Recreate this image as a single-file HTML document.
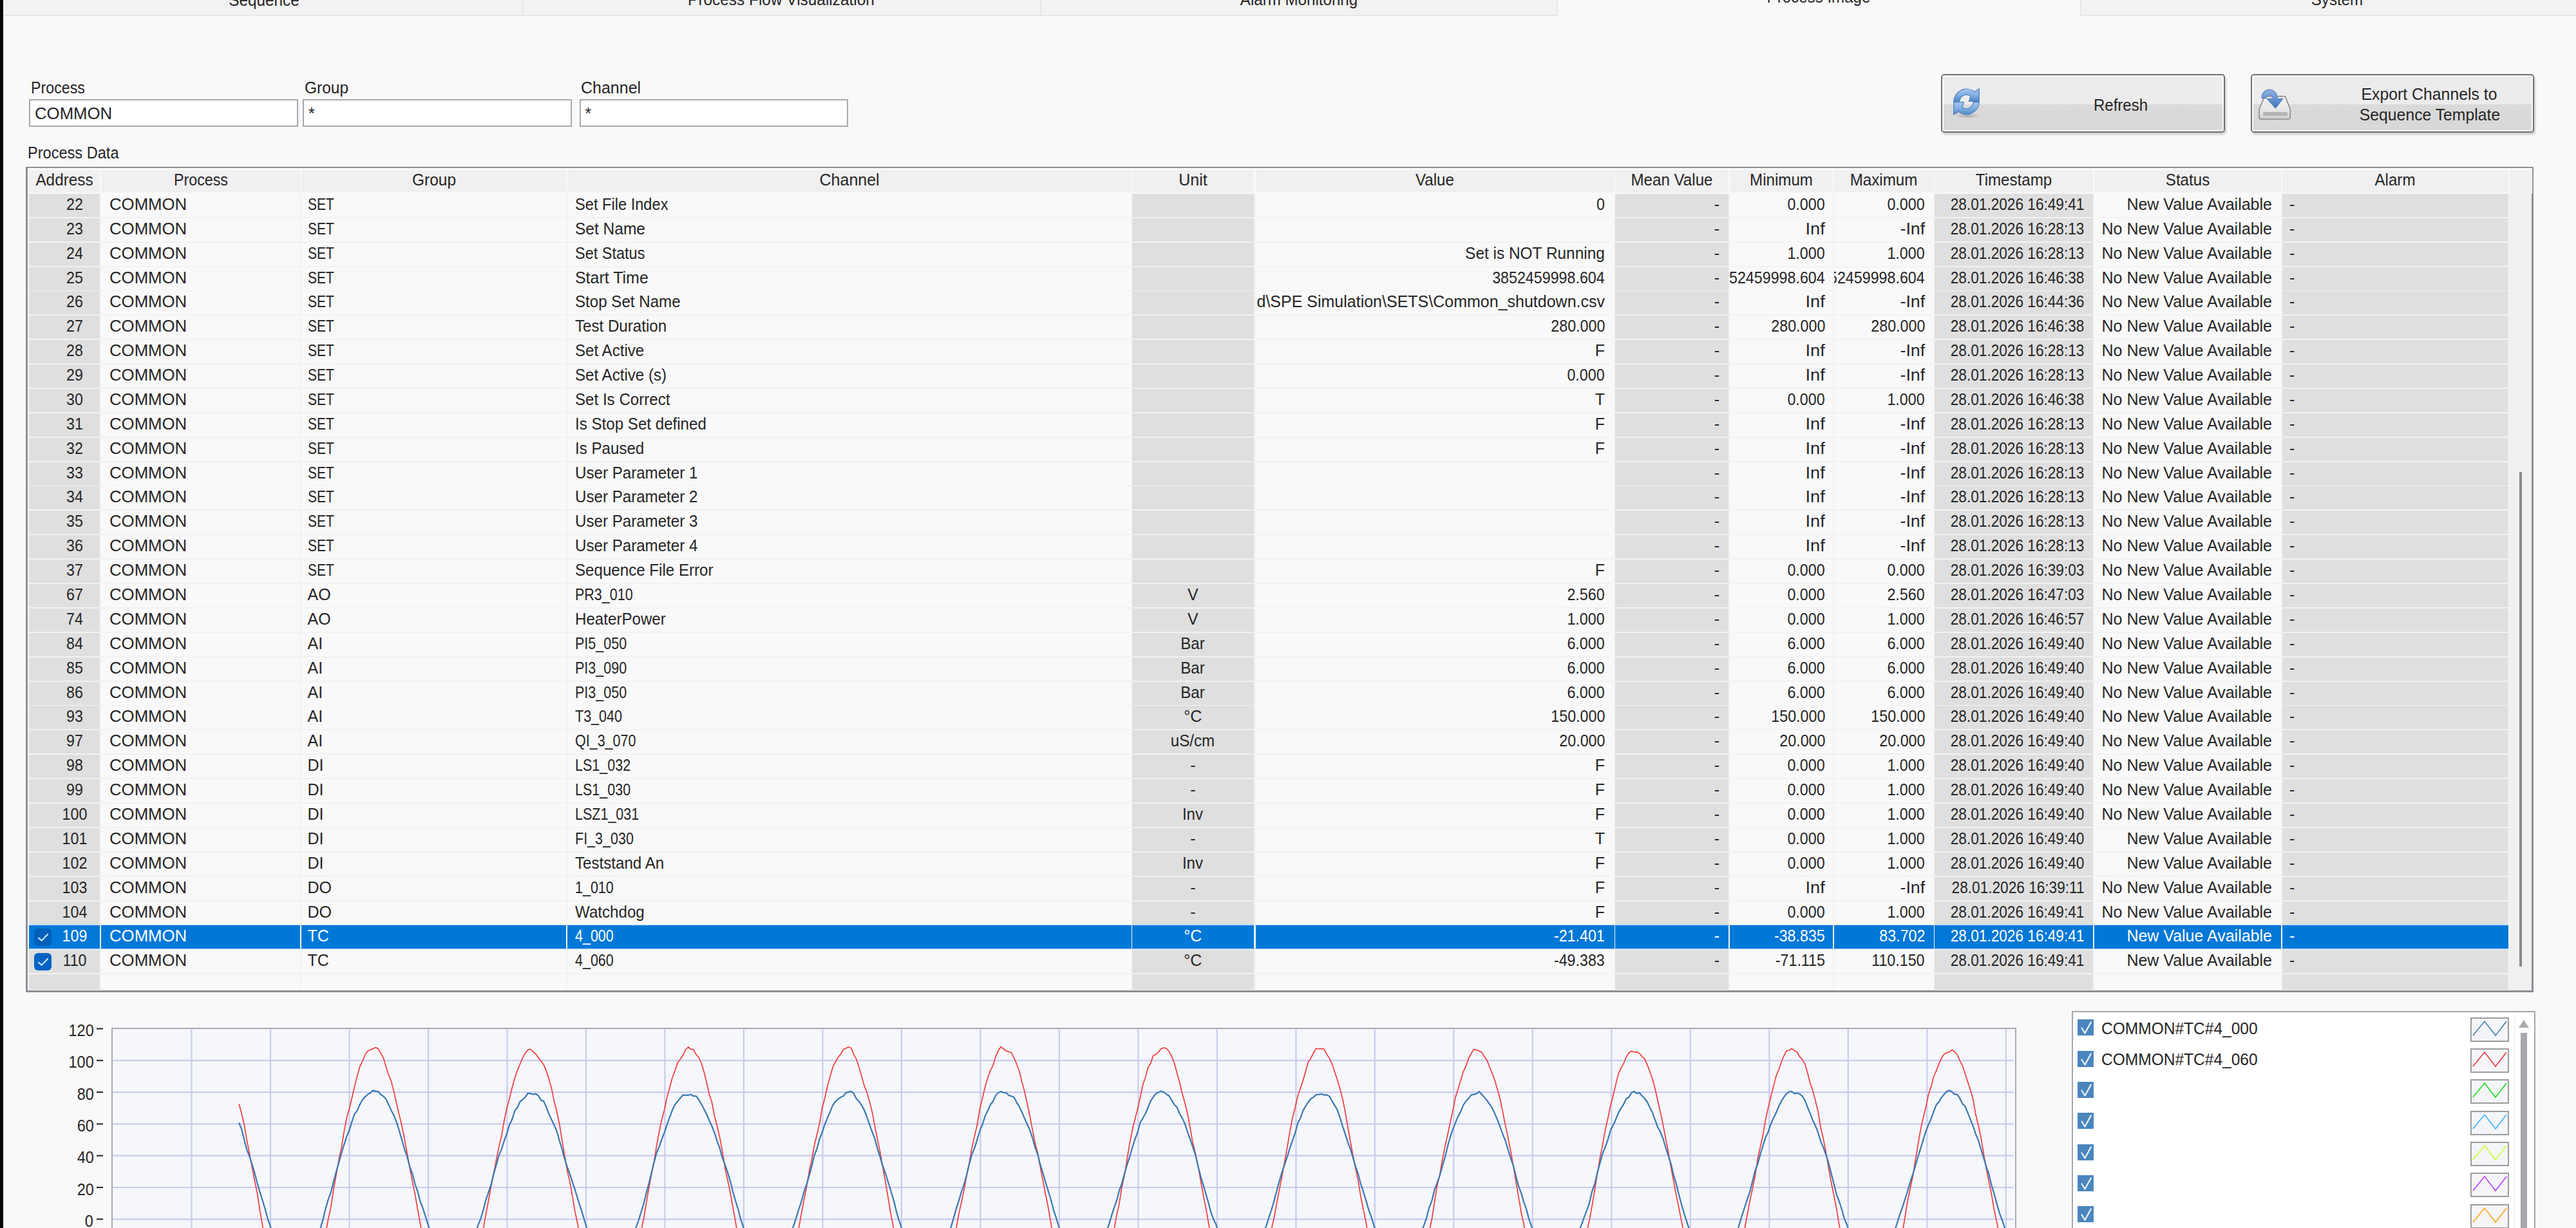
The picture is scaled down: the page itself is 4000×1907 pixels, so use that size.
<!DOCTYPE html><html><head><meta charset="utf-8"><style>
html,body{margin:0;padding:0;}
body{width:4000px;height:1907px;overflow:hidden;position:relative;background:#f9f9f9;font-family:"Liberation Sans",sans-serif;}
.t{position:absolute;white-space:nowrap;line-height:1;}
.r{position:absolute;}
</style></head><body>
<div class="r" style="left:0.0px;top:0.0px;width:4.5px;height:1907.0px;background:#050505;"></div>
<div class="r" style="left:5.0px;top:0.0px;width:2413.0px;height:23.0px;background:#f2f2f2;"></div>
<div class="r" style="left:3231.0px;top:0.0px;width:769.0px;height:23.0px;background:#f2f2f2;"></div>
<div class="r" style="left:5.0px;top:23.0px;width:2413.0px;height:2.0px;background:#e6e6e6;"></div>
<div class="r" style="left:3231.0px;top:23.0px;width:769.0px;height:2.0px;background:#e6e6e6;"></div>
<div class="r" style="left:810.5px;top:0.0px;width:2.0px;height:23.0px;background:#e6e6e6;"></div>
<div class="r" style="left:1615.0px;top:0.0px;width:2.0px;height:23.0px;background:#e6e6e6;"></div>
<div class="r" style="left:2417.0px;top:0.0px;width:2.0px;height:24.0px;background:#e6e6e6;"></div>
<div class="r" style="left:3230.0px;top:0.0px;width:2.0px;height:24.0px;background:#e6e6e6;"></div>
<div class="t" style="top:-12.3px;font-size:25px;color:#262626;transform:scaleX(0.973);transform-origin:center 0;left:-90.2px;width:1000px;text-align:center;">Sequence</div>
<div class="t" style="top:-12.8px;font-size:25px;color:#262626;transform:scaleX(0.976);transform-origin:center 0;left:713.4px;width:1000px;text-align:center;">Process Flow Visualization</div>
<div class="t" style="top:-12.7px;font-size:25px;color:#262626;transform:scaleX(0.965);transform-origin:center 0;left:1517.2px;width:1000px;text-align:center;">Alarm Monitoring</div>
<div class="t" style="top:-17.1px;font-size:25px;color:#262626;transform:scaleX(0.965);transform-origin:center 0;left:2323.5px;width:1000px;text-align:center;">Process Image</div>
<div class="t" style="top:-13.1px;font-size:25px;color:#262626;transform:scaleX(0.965);transform-origin:center 0;left:3129.1px;width:1000px;text-align:center;">System</div>
<div class="t" style="top:124.0px;font-size:25px;color:#262626;transform:scaleX(0.93);transform-origin:left 0;left:47.5px;">Process</div>
<div class="r" style="left:45px;top:154px;width:414px;height:38.5px;border:2px solid #a9a9b1;background:#fff;"></div>
<div class="t" style="top:164.1px;font-size:25px;color:#262626;transform:scaleX(1.03);transform-origin:left 0;left:54.0px;">COMMON</div>
<div class="t" style="top:124.0px;font-size:25px;color:#262626;transform:scaleX(0.98);transform-origin:left 0;left:472.5px;">Group</div>
<div class="r" style="left:470px;top:154px;width:413.5px;height:38.5px;border:2px solid #a9a9b1;background:#fff;"></div>
<div class="t" style="top:164.1px;font-size:25px;color:#262626;left:479.0px;">*</div>
<div class="t" style="top:124.0px;font-size:25px;color:#262626;left:902.0px;">Channel</div>
<div class="r" style="left:899.5px;top:154px;width:413.5px;height:38.5px;border:2px solid #a9a9b1;background:#fff;"></div>
<div class="t" style="top:164.1px;font-size:25px;color:#262626;left:908.5px;">*</div>
<div class="r" style="left:3013.7px;top:114.6px;width:437.3000000000002px;height:87.80000000000001px;border:2px solid #707070;border-radius:5px;box-shadow:2px 3px 3px rgba(0,0,0,0.18);background:linear-gradient(#ececec 0,#ececec 52%,#dadada 52%,#d8d8d8 100%);"><div style="position:absolute;left:0;top:0;right:0;bottom:0;border:2px solid rgba(255,255,255,0.85);border-radius:3px;"></div></div>
<svg class="r" style="left:3030px;top:134px;" width="48" height="52" viewBox="0 0 48 52">
<defs><linearGradient id="rg" x1="0" y1="0" x2="0" y2="1"><stop offset="0" stop-color="#a9c9ee"/><stop offset="0.5" stop-color="#80aee2"/><stop offset="1" stop-color="#4f86c8"/></linearGradient>
<radialGradient id="sh" cx="0.5" cy="0.5" r="0.5"><stop offset="0" stop-color="rgba(0,0,0,0.22)"/><stop offset="1" stop-color="rgba(0,0,0,0)"/></radialGradient></defs>
<ellipse cx="25" cy="46" rx="20" ry="4" fill="url(#sh)"/>
<path d="M3.7 23.4 A20 20 0 0 1 36.1 8.5 L43.3 3.8 L43.3 23.4 L27.5 23.4 L30 15.5 A10.5 10.5 0 0 0 13 23.4 Z" fill="url(#rg)" stroke="#5585c2" stroke-width="1.3" stroke-linejoin="round"/>
<path d="M43.3 24.6 A20 20 0 0 1 10.9 39.5 L3.7 44.2 L3.7 24.6 L19.5 24.6 L17 32.5 A10.5 10.5 0 0 0 34 24.6 Z" fill="url(#rg)" stroke="#5585c2" stroke-width="1.3" stroke-linejoin="round"/>
</svg>
<div class="t" style="top:151.2px;font-size:25px;color:#262626;transform:scaleX(0.96);transform-origin:center 0;left:2793.3px;width:1000px;text-align:center;">Refresh</div>
<div class="r" style="left:3494.5px;top:115.1px;width:436.0999999999999px;height:86.9px;border:2px solid #707070;border-radius:5px;box-shadow:2px 3px 3px rgba(0,0,0,0.18);background:linear-gradient(#ececec 0,#ececec 52%,#dadada 52%,#d8d8d8 100%);"><div style="position:absolute;left:0;top:0;right:0;bottom:0;border:2px solid rgba(255,255,255,0.85);border-radius:3px;"></div></div>
<svg class="r" style="left:3506px;top:134px;" width="54" height="54" viewBox="0 0 54 54">
<defs><linearGradient id="dg" x1="0" y1="0" x2="0" y2="1"><stop offset="0" stop-color="#f4f4f4"/><stop offset="0.6" stop-color="#e6e6e6"/><stop offset="1" stop-color="#cfcfcf"/></linearGradient>
<linearGradient id="ag" x1="0" y1="0" x2="0" y2="1"><stop offset="0" stop-color="#8fb4e2"/><stop offset="1" stop-color="#3d74bd"/></linearGradient></defs>
<path d="M10.5 15.6 L42.4 15.6 L50.2 35.5 L50.2 48 Q50.2 51 47 51 L5 51 Q2 51 2 48 L2 35.5 Z" fill="url(#dg)" stroke="#8a8a8a" stroke-width="1.6" stroke-linejoin="round"/>
<rect x="8.5" y="40" width="37.2" height="6" fill="#b4b4b4"/>
<path d="M6 18.5 A12 12 0 0 1 30 15.6 L30 19.2 L39.2 19.2 L27.4 34.2 L13.8 19.2 L23 19.2 A5 5 0 0 0 13 18.5 Z" fill="url(#ag)" stroke="#4a78b8" stroke-width="1" stroke-linejoin="round"/>
</svg>
<div class="t" style="top:133.9px;font-size:25px;color:#262626;transform:scaleX(0.992);transform-origin:center 0;left:3271.6px;width:1000px;text-align:center;">Export Channels to</div>
<div class="t" style="top:165.8px;font-size:25px;color:#262626;transform:scaleX(0.99);transform-origin:center 0;left:3272.7px;width:1000px;text-align:center;">Sequence Template</div>
<div class="t" style="top:224.9px;font-size:25px;color:#262626;transform:scaleX(0.943);transform-origin:left 0;left:43.0px;">Process Data</div>
<div class="r" style="left:40px;top:258.5px;width:3888px;height:1276.0px;border:3px solid #8e8e96;background:#f2f2f2;"></div>
<div class="r" style="left:43.0px;top:261.0px;width:3889.0px;height:39.8px;background:#fafafa;"></div>
<div class="r" style="left:43.0px;top:261.0px;width:2.0px;height:1276.5px;background:#fafafa;"></div>
<div class="r" style="left:3894.8px;top:299.3px;width:1.7px;height:1238.2px;background:#fafafa;"></div>
<div class="r" style="left:45.0px;top:263.5px;width:110.3px;height:35.8px;background:#f0f0f0;"></div>
<div class="t" style="top:267.1px;font-size:25px;color:#262626;transform:scaleX(0.973);transform-origin:center 0;left:-399.9px;width:1000px;text-align:center;">Address</div>
<div class="r" style="left:157.2px;top:263.5px;width:308.6px;height:35.8px;background:#f0f0f0;"></div>
<div class="t" style="top:267.1px;font-size:25px;color:#262626;transform:scaleX(0.93);transform-origin:center 0;left:-188.5px;width:1000px;text-align:center;">Process</div>
<div class="r" style="left:467.8px;top:263.5px;width:411.5px;height:35.8px;background:#f0f0f0;"></div>
<div class="t" style="top:267.1px;font-size:25px;color:#262626;transform:scaleX(0.98);transform-origin:center 0;left:173.5px;width:1000px;text-align:center;">Group</div>
<div class="r" style="left:881.2px;top:263.5px;width:875.8px;height:35.8px;background:#f0f0f0;"></div>
<div class="t" style="top:267.1px;font-size:25px;color:#262626;left:819.1px;width:1000px;text-align:center;">Channel</div>
<div class="r" style="left:1757.8px;top:263.5px;width:189.4px;height:35.8px;background:#f0f0f0;"></div>
<div class="t" style="top:267.1px;font-size:25px;color:#262626;left:1352.5px;width:1000px;text-align:center;">Unit</div>
<div class="r" style="left:1949.5px;top:263.5px;width:557.1px;height:35.8px;background:#f0f0f0;"></div>
<div class="t" style="top:267.1px;font-size:25px;color:#262626;transform:scaleX(0.965);transform-origin:center 0;left:1728.1px;width:1000px;text-align:center;">Value</div>
<div class="r" style="left:2507.8px;top:263.5px;width:176.2px;height:35.8px;background:#f0f0f0;"></div>
<div class="t" style="top:267.1px;font-size:25px;color:#262626;transform:scaleX(0.965);transform-origin:center 0;left:2095.9px;width:1000px;text-align:center;">Mean Value</div>
<div class="r" style="left:2686.0px;top:263.5px;width:160.3px;height:35.8px;background:#f0f0f0;"></div>
<div class="t" style="top:267.1px;font-size:25px;color:#262626;transform:scaleX(0.965);transform-origin:center 0;left:2266.2px;width:1000px;text-align:center;">Minimum</div>
<div class="r" style="left:2848.0px;top:263.5px;width:154.5px;height:35.8px;background:#f0f0f0;"></div>
<div class="t" style="top:267.1px;font-size:25px;color:#262626;transform:scaleX(0.965);transform-origin:center 0;left:2425.2px;width:1000px;text-align:center;">Maximum</div>
<div class="r" style="left:3003.9px;top:263.5px;width:246.5px;height:35.8px;background:#f0f0f0;"></div>
<div class="t" style="top:267.1px;font-size:25px;color:#262626;transform:scaleX(0.965);transform-origin:center 0;left:2627.2px;width:1000px;text-align:center;">Timestamp</div>
<div class="r" style="left:3252.0px;top:263.5px;width:289.5px;height:35.8px;background:#f0f0f0;"></div>
<div class="t" style="top:267.1px;font-size:25px;color:#262626;transform:scaleX(0.965);transform-origin:center 0;left:2896.8px;width:1000px;text-align:center;">Status</div>
<div class="r" style="left:3543.5px;top:263.5px;width:351.3px;height:35.8px;background:#f0f0f0;"></div>
<div class="t" style="top:267.1px;font-size:25px;color:#262626;transform:scaleX(0.965);transform-origin:center 0;left:3219.2px;width:1000px;text-align:center;">Alarm</div>
<div class="r" style="left:3896.5px;top:263.5px;width:34.5px;height:1274.0px;background:#f0f0f0;"></div>
<div class="r" style="left:45.0px;top:300.8px;width:110.3px;height:36.0px;background:#dfdfdf;"></div>
<div class="t" style="top:304.8px;font-size:25px;color:#262626;transform:scaleX(0.93);transform-origin:center 0;left:-384.0px;width:1000px;text-align:center;">22</div>
<div class="r" style="left:157.2px;top:300.8px;width:308.6px;height:36.0px;background:#f9f9f9;"></div>
<div class="t" style="top:304.8px;font-size:25px;color:#262626;transform:scaleX(1.03);transform-origin:left 0;left:169.8px;">COMMON</div>
<div class="r" style="left:467.8px;top:300.8px;width:411.5px;height:36.0px;background:#f9f9f9;"></div>
<div class="t" style="top:304.8px;font-size:25px;color:#262626;transform:scaleX(0.84);transform-origin:left 0;left:477.5px;">SET</div>
<div class="r" style="left:881.2px;top:300.8px;width:875.8px;height:36.0px;background:#f9f9f9;"></div>
<div class="t" style="top:304.8px;font-size:25px;color:#262626;transform:scaleX(0.945);transform-origin:left 0;left:892.9px;">Set File Index</div>
<div class="r" style="left:1757.8px;top:300.8px;width:189.4px;height:36.0px;background:#dfdfdf;"></div>
<div class="r" style="left:1949.5px;top:300.8px;width:557.1px;height:36.0px;background:#f9f9f9;"></div>
<div class="r" style="left:1949.5px;top:300.8px;width:557.1px;height:36.0px;overflow:hidden;">
<div class="t" style="top:4px;right:14.6px;font-size:25px;color:#262626;transform:scaleX(0.93);transform-origin:right 0;">0</div></div>
<div class="r" style="left:2507.8px;top:300.8px;width:176.2px;height:36.0px;background:#dfdfdf;"></div>
<div class="r" style="left:2507.8px;top:300.8px;width:176.2px;height:36.0px;overflow:hidden;">
<div class="t" style="top:4px;right:14.0px;font-size:25px;color:#262626;">-</div></div>
<div class="r" style="left:2686.0px;top:300.8px;width:160.3px;height:36.0px;background:#f9f9f9;"></div>
<div class="r" style="left:2686.0px;top:300.8px;width:160.3px;height:36.0px;overflow:hidden;">
<div class="t" style="top:4px;right:12.3px;font-size:25px;color:#262626;transform:scaleX(0.93);transform-origin:right 0;">0.000</div></div>
<div class="r" style="left:2848.0px;top:300.8px;width:154.5px;height:36.0px;background:#f9f9f9;"></div>
<div class="r" style="left:2848.0px;top:300.8px;width:154.5px;height:36.0px;overflow:hidden;">
<div class="t" style="top:4px;right:13.5px;font-size:25px;color:#262626;transform:scaleX(0.93);transform-origin:right 0;">0.000</div></div>
<div class="r" style="left:3003.9px;top:300.8px;width:246.5px;height:36.0px;background:#dfdfdf;"></div>
<div class="r" style="left:3003.9px;top:300.8px;width:246.5px;height:36.0px;overflow:hidden;">
<div class="t" style="top:4px;right:13.6px;font-size:25px;color:#262626;transform:scaleX(0.905);transform-origin:right 0;">28.01.2026 16:49:41</div></div>
<div class="r" style="left:3252.0px;top:300.8px;width:289.5px;height:36.0px;background:#f9f9f9;"></div>
<div class="r" style="left:3252.0px;top:300.8px;width:289.5px;height:36.0px;overflow:hidden;">
<div class="t" style="top:4px;right:13.5px;font-size:25px;color:#262626;">New Value Available</div></div>
<div class="r" style="left:3543.5px;top:300.8px;width:351.3px;height:36.0px;background:#dfdfdf;"></div>
<div class="t" style="top:304.8px;font-size:25px;color:#262626;left:3555.0px;">-</div>
<div class="r" style="left:45.0px;top:338.7px;width:110.3px;height:36.0px;background:#dfdfdf;"></div>
<div class="t" style="top:342.7px;font-size:25px;color:#262626;transform:scaleX(0.93);transform-origin:center 0;left:-384.0px;width:1000px;text-align:center;">23</div>
<div class="r" style="left:157.2px;top:338.7px;width:308.6px;height:36.0px;background:#f9f9f9;"></div>
<div class="t" style="top:342.7px;font-size:25px;color:#262626;transform:scaleX(1.03);transform-origin:left 0;left:169.8px;">COMMON</div>
<div class="r" style="left:467.8px;top:338.7px;width:411.5px;height:36.0px;background:#f9f9f9;"></div>
<div class="t" style="top:342.7px;font-size:25px;color:#262626;transform:scaleX(0.84);transform-origin:left 0;left:477.5px;">SET</div>
<div class="r" style="left:881.2px;top:338.7px;width:875.8px;height:36.0px;background:#f9f9f9;"></div>
<div class="t" style="top:342.7px;font-size:25px;color:#262626;transform:scaleX(0.98);transform-origin:left 0;left:892.9px;">Set Name</div>
<div class="r" style="left:1757.8px;top:338.7px;width:189.4px;height:36.0px;background:#dfdfdf;"></div>
<div class="r" style="left:1949.5px;top:338.7px;width:557.1px;height:36.0px;background:#f9f9f9;"></div>
<div class="r" style="left:2507.8px;top:338.7px;width:176.2px;height:36.0px;background:#dfdfdf;"></div>
<div class="r" style="left:2507.8px;top:338.7px;width:176.2px;height:36.0px;overflow:hidden;">
<div class="t" style="top:4px;right:14.0px;font-size:25px;color:#262626;">-</div></div>
<div class="r" style="left:2686.0px;top:338.7px;width:160.3px;height:36.0px;background:#f9f9f9;"></div>
<div class="r" style="left:2686.0px;top:338.7px;width:160.3px;height:36.0px;overflow:hidden;">
<div class="t" style="top:4px;right:12.3px;font-size:25px;color:#262626;transform:scaleX(1.09);transform-origin:right 0;">Inf</div></div>
<div class="r" style="left:2848.0px;top:338.7px;width:154.5px;height:36.0px;background:#f9f9f9;"></div>
<div class="r" style="left:2848.0px;top:338.7px;width:154.5px;height:36.0px;overflow:hidden;">
<div class="t" style="top:4px;right:13.5px;font-size:25px;color:#262626;transform:scaleX(1.07);transform-origin:right 0;">-Inf</div></div>
<div class="r" style="left:3003.9px;top:338.7px;width:246.5px;height:36.0px;background:#dfdfdf;"></div>
<div class="r" style="left:3003.9px;top:338.7px;width:246.5px;height:36.0px;overflow:hidden;">
<div class="t" style="top:4px;right:13.6px;font-size:25px;color:#262626;transform:scaleX(0.905);transform-origin:right 0;">28.01.2026 16:28:13</div></div>
<div class="r" style="left:3252.0px;top:338.7px;width:289.5px;height:36.0px;background:#f9f9f9;"></div>
<div class="r" style="left:3252.0px;top:338.7px;width:289.5px;height:36.0px;overflow:hidden;">
<div class="t" style="top:4px;right:13.5px;font-size:25px;color:#262626;">No New Value Available</div></div>
<div class="r" style="left:3543.5px;top:338.7px;width:351.3px;height:36.0px;background:#dfdfdf;"></div>
<div class="t" style="top:342.7px;font-size:25px;color:#262626;left:3555.0px;">-</div>
<div class="r" style="left:45.0px;top:376.6px;width:110.3px;height:36.0px;background:#dfdfdf;"></div>
<div class="t" style="top:380.6px;font-size:25px;color:#262626;transform:scaleX(0.93);transform-origin:center 0;left:-384.0px;width:1000px;text-align:center;">24</div>
<div class="r" style="left:157.2px;top:376.6px;width:308.6px;height:36.0px;background:#f9f9f9;"></div>
<div class="t" style="top:380.6px;font-size:25px;color:#262626;transform:scaleX(1.03);transform-origin:left 0;left:169.8px;">COMMON</div>
<div class="r" style="left:467.8px;top:376.6px;width:411.5px;height:36.0px;background:#f9f9f9;"></div>
<div class="t" style="top:380.6px;font-size:25px;color:#262626;transform:scaleX(0.84);transform-origin:left 0;left:477.5px;">SET</div>
<div class="r" style="left:881.2px;top:376.6px;width:875.8px;height:36.0px;background:#f9f9f9;"></div>
<div class="t" style="top:380.6px;font-size:25px;color:#262626;transform:scaleX(0.94);transform-origin:left 0;left:892.9px;">Set Status</div>
<div class="r" style="left:1757.8px;top:376.6px;width:189.4px;height:36.0px;background:#dfdfdf;"></div>
<div class="r" style="left:1949.5px;top:376.6px;width:557.1px;height:36.0px;background:#f9f9f9;"></div>
<div class="r" style="left:1949.5px;top:376.6px;width:557.1px;height:36.0px;overflow:hidden;">
<div class="t" style="top:4px;right:14.6px;font-size:25px;color:#262626;transform:scaleX(0.977);transform-origin:right 0;">Set is NOT Running</div></div>
<div class="r" style="left:2507.8px;top:376.6px;width:176.2px;height:36.0px;background:#dfdfdf;"></div>
<div class="r" style="left:2507.8px;top:376.6px;width:176.2px;height:36.0px;overflow:hidden;">
<div class="t" style="top:4px;right:14.0px;font-size:25px;color:#262626;">-</div></div>
<div class="r" style="left:2686.0px;top:376.6px;width:160.3px;height:36.0px;background:#f9f9f9;"></div>
<div class="r" style="left:2686.0px;top:376.6px;width:160.3px;height:36.0px;overflow:hidden;">
<div class="t" style="top:4px;right:12.3px;font-size:25px;color:#262626;transform:scaleX(0.93);transform-origin:right 0;">1.000</div></div>
<div class="r" style="left:2848.0px;top:376.6px;width:154.5px;height:36.0px;background:#f9f9f9;"></div>
<div class="r" style="left:2848.0px;top:376.6px;width:154.5px;height:36.0px;overflow:hidden;">
<div class="t" style="top:4px;right:13.5px;font-size:25px;color:#262626;transform:scaleX(0.93);transform-origin:right 0;">1.000</div></div>
<div class="r" style="left:3003.9px;top:376.6px;width:246.5px;height:36.0px;background:#dfdfdf;"></div>
<div class="r" style="left:3003.9px;top:376.6px;width:246.5px;height:36.0px;overflow:hidden;">
<div class="t" style="top:4px;right:13.6px;font-size:25px;color:#262626;transform:scaleX(0.905);transform-origin:right 0;">28.01.2026 16:28:13</div></div>
<div class="r" style="left:3252.0px;top:376.6px;width:289.5px;height:36.0px;background:#f9f9f9;"></div>
<div class="r" style="left:3252.0px;top:376.6px;width:289.5px;height:36.0px;overflow:hidden;">
<div class="t" style="top:4px;right:13.5px;font-size:25px;color:#262626;">No New Value Available</div></div>
<div class="r" style="left:3543.5px;top:376.6px;width:351.3px;height:36.0px;background:#dfdfdf;"></div>
<div class="t" style="top:380.6px;font-size:25px;color:#262626;left:3555.0px;">-</div>
<div class="r" style="left:45.0px;top:414.5px;width:110.3px;height:36.0px;background:#dfdfdf;"></div>
<div class="t" style="top:418.5px;font-size:25px;color:#262626;transform:scaleX(0.93);transform-origin:center 0;left:-384.0px;width:1000px;text-align:center;">25</div>
<div class="r" style="left:157.2px;top:414.5px;width:308.6px;height:36.0px;background:#f9f9f9;"></div>
<div class="t" style="top:418.5px;font-size:25px;color:#262626;transform:scaleX(1.03);transform-origin:left 0;left:169.8px;">COMMON</div>
<div class="r" style="left:467.8px;top:414.5px;width:411.5px;height:36.0px;background:#f9f9f9;"></div>
<div class="t" style="top:418.5px;font-size:25px;color:#262626;transform:scaleX(0.84);transform-origin:left 0;left:477.5px;">SET</div>
<div class="r" style="left:881.2px;top:414.5px;width:875.8px;height:36.0px;background:#f9f9f9;"></div>
<div class="t" style="top:418.5px;font-size:25px;color:#262626;left:892.9px;">Start Time</div>
<div class="r" style="left:1757.8px;top:414.5px;width:189.4px;height:36.0px;background:#dfdfdf;"></div>
<div class="r" style="left:1949.5px;top:414.5px;width:557.1px;height:36.0px;background:#f9f9f9;"></div>
<div class="r" style="left:1949.5px;top:414.5px;width:557.1px;height:36.0px;overflow:hidden;">
<div class="t" style="top:4px;right:14.6px;font-size:25px;color:#262626;transform:scaleX(0.93);transform-origin:right 0;">3852459998.604</div></div>
<div class="r" style="left:2507.8px;top:414.5px;width:176.2px;height:36.0px;background:#dfdfdf;"></div>
<div class="r" style="left:2507.8px;top:414.5px;width:176.2px;height:36.0px;overflow:hidden;">
<div class="t" style="top:4px;right:14.0px;font-size:25px;color:#262626;">-</div></div>
<div class="r" style="left:2686.0px;top:414.5px;width:160.3px;height:36.0px;background:#f9f9f9;"></div>
<div class="r" style="left:2686.0px;top:414.5px;width:160.3px;height:36.0px;overflow:hidden;">
<div class="t" style="top:4px;right:12.3px;font-size:25px;color:#262626;transform:scaleX(0.93);transform-origin:right 0;">3852459998.604</div></div>
<div class="r" style="left:2848.0px;top:414.5px;width:154.5px;height:36.0px;background:#f9f9f9;"></div>
<div class="r" style="left:2848.0px;top:414.5px;width:154.5px;height:36.0px;overflow:hidden;">
<div class="t" style="top:4px;right:13.5px;font-size:25px;color:#262626;transform:scaleX(0.93);transform-origin:right 0;">3852459998.604</div></div>
<div class="r" style="left:3003.9px;top:414.5px;width:246.5px;height:36.0px;background:#dfdfdf;"></div>
<div class="r" style="left:3003.9px;top:414.5px;width:246.5px;height:36.0px;overflow:hidden;">
<div class="t" style="top:4px;right:13.6px;font-size:25px;color:#262626;transform:scaleX(0.905);transform-origin:right 0;">28.01.2026 16:46:38</div></div>
<div class="r" style="left:3252.0px;top:414.5px;width:289.5px;height:36.0px;background:#f9f9f9;"></div>
<div class="r" style="left:3252.0px;top:414.5px;width:289.5px;height:36.0px;overflow:hidden;">
<div class="t" style="top:4px;right:13.5px;font-size:25px;color:#262626;">No New Value Available</div></div>
<div class="r" style="left:3543.5px;top:414.5px;width:351.3px;height:36.0px;background:#dfdfdf;"></div>
<div class="t" style="top:418.5px;font-size:25px;color:#262626;left:3555.0px;">-</div>
<div class="r" style="left:45.0px;top:452.3px;width:110.3px;height:36.0px;background:#dfdfdf;"></div>
<div class="t" style="top:456.3px;font-size:25px;color:#262626;transform:scaleX(0.93);transform-origin:center 0;left:-384.0px;width:1000px;text-align:center;">26</div>
<div class="r" style="left:157.2px;top:452.3px;width:308.6px;height:36.0px;background:#f9f9f9;"></div>
<div class="t" style="top:456.3px;font-size:25px;color:#262626;transform:scaleX(1.03);transform-origin:left 0;left:169.8px;">COMMON</div>
<div class="r" style="left:467.8px;top:452.3px;width:411.5px;height:36.0px;background:#f9f9f9;"></div>
<div class="t" style="top:456.3px;font-size:25px;color:#262626;transform:scaleX(0.84);transform-origin:left 0;left:477.5px;">SET</div>
<div class="r" style="left:881.2px;top:452.3px;width:875.8px;height:36.0px;background:#f9f9f9;"></div>
<div class="t" style="top:456.3px;font-size:25px;color:#262626;transform:scaleX(0.965);transform-origin:left 0;left:892.9px;">Stop Set Name</div>
<div class="r" style="left:1757.8px;top:452.3px;width:189.4px;height:36.0px;background:#dfdfdf;"></div>
<div class="r" style="left:1949.5px;top:452.3px;width:557.1px;height:36.0px;background:#f9f9f9;"></div>
<div class="r" style="left:1949.5px;top:452.3px;width:557.1px;height:36.0px;overflow:hidden;">
<div class="t" style="top:4px;right:14.6px;font-size:25px;color:#262626;">C:\Users\Public\Documents\Teststand\SPE Simulation\SETS\Common_shutdown.csv</div></div>
<div class="r" style="left:2507.8px;top:452.3px;width:176.2px;height:36.0px;background:#dfdfdf;"></div>
<div class="r" style="left:2507.8px;top:452.3px;width:176.2px;height:36.0px;overflow:hidden;">
<div class="t" style="top:4px;right:14.0px;font-size:25px;color:#262626;">-</div></div>
<div class="r" style="left:2686.0px;top:452.3px;width:160.3px;height:36.0px;background:#f9f9f9;"></div>
<div class="r" style="left:2686.0px;top:452.3px;width:160.3px;height:36.0px;overflow:hidden;">
<div class="t" style="top:4px;right:12.3px;font-size:25px;color:#262626;transform:scaleX(1.09);transform-origin:right 0;">Inf</div></div>
<div class="r" style="left:2848.0px;top:452.3px;width:154.5px;height:36.0px;background:#f9f9f9;"></div>
<div class="r" style="left:2848.0px;top:452.3px;width:154.5px;height:36.0px;overflow:hidden;">
<div class="t" style="top:4px;right:13.5px;font-size:25px;color:#262626;transform:scaleX(1.07);transform-origin:right 0;">-Inf</div></div>
<div class="r" style="left:3003.9px;top:452.3px;width:246.5px;height:36.0px;background:#dfdfdf;"></div>
<div class="r" style="left:3003.9px;top:452.3px;width:246.5px;height:36.0px;overflow:hidden;">
<div class="t" style="top:4px;right:13.6px;font-size:25px;color:#262626;transform:scaleX(0.905);transform-origin:right 0;">28.01.2026 16:44:36</div></div>
<div class="r" style="left:3252.0px;top:452.3px;width:289.5px;height:36.0px;background:#f9f9f9;"></div>
<div class="r" style="left:3252.0px;top:452.3px;width:289.5px;height:36.0px;overflow:hidden;">
<div class="t" style="top:4px;right:13.5px;font-size:25px;color:#262626;">No New Value Available</div></div>
<div class="r" style="left:3543.5px;top:452.3px;width:351.3px;height:36.0px;background:#dfdfdf;"></div>
<div class="t" style="top:456.3px;font-size:25px;color:#262626;left:3555.0px;">-</div>
<div class="r" style="left:45.0px;top:490.2px;width:110.3px;height:36.0px;background:#dfdfdf;"></div>
<div class="t" style="top:494.2px;font-size:25px;color:#262626;transform:scaleX(0.93);transform-origin:center 0;left:-384.0px;width:1000px;text-align:center;">27</div>
<div class="r" style="left:157.2px;top:490.2px;width:308.6px;height:36.0px;background:#f9f9f9;"></div>
<div class="t" style="top:494.2px;font-size:25px;color:#262626;transform:scaleX(1.03);transform-origin:left 0;left:169.8px;">COMMON</div>
<div class="r" style="left:467.8px;top:490.2px;width:411.5px;height:36.0px;background:#f9f9f9;"></div>
<div class="t" style="top:494.2px;font-size:25px;color:#262626;transform:scaleX(0.84);transform-origin:left 0;left:477.5px;">SET</div>
<div class="r" style="left:881.2px;top:490.2px;width:875.8px;height:36.0px;background:#f9f9f9;"></div>
<div class="t" style="top:494.2px;font-size:25px;color:#262626;transform:scaleX(0.965);transform-origin:left 0;left:892.9px;">Test Duration</div>
<div class="r" style="left:1757.8px;top:490.2px;width:189.4px;height:36.0px;background:#dfdfdf;"></div>
<div class="r" style="left:1949.5px;top:490.2px;width:557.1px;height:36.0px;background:#f9f9f9;"></div>
<div class="r" style="left:1949.5px;top:490.2px;width:557.1px;height:36.0px;overflow:hidden;">
<div class="t" style="top:4px;right:14.6px;font-size:25px;color:#262626;transform:scaleX(0.93);transform-origin:right 0;">280.000</div></div>
<div class="r" style="left:2507.8px;top:490.2px;width:176.2px;height:36.0px;background:#dfdfdf;"></div>
<div class="r" style="left:2507.8px;top:490.2px;width:176.2px;height:36.0px;overflow:hidden;">
<div class="t" style="top:4px;right:14.0px;font-size:25px;color:#262626;">-</div></div>
<div class="r" style="left:2686.0px;top:490.2px;width:160.3px;height:36.0px;background:#f9f9f9;"></div>
<div class="r" style="left:2686.0px;top:490.2px;width:160.3px;height:36.0px;overflow:hidden;">
<div class="t" style="top:4px;right:12.3px;font-size:25px;color:#262626;transform:scaleX(0.93);transform-origin:right 0;">280.000</div></div>
<div class="r" style="left:2848.0px;top:490.2px;width:154.5px;height:36.0px;background:#f9f9f9;"></div>
<div class="r" style="left:2848.0px;top:490.2px;width:154.5px;height:36.0px;overflow:hidden;">
<div class="t" style="top:4px;right:13.5px;font-size:25px;color:#262626;transform:scaleX(0.93);transform-origin:right 0;">280.000</div></div>
<div class="r" style="left:3003.9px;top:490.2px;width:246.5px;height:36.0px;background:#dfdfdf;"></div>
<div class="r" style="left:3003.9px;top:490.2px;width:246.5px;height:36.0px;overflow:hidden;">
<div class="t" style="top:4px;right:13.6px;font-size:25px;color:#262626;transform:scaleX(0.905);transform-origin:right 0;">28.01.2026 16:46:38</div></div>
<div class="r" style="left:3252.0px;top:490.2px;width:289.5px;height:36.0px;background:#f9f9f9;"></div>
<div class="r" style="left:3252.0px;top:490.2px;width:289.5px;height:36.0px;overflow:hidden;">
<div class="t" style="top:4px;right:13.5px;font-size:25px;color:#262626;">No New Value Available</div></div>
<div class="r" style="left:3543.5px;top:490.2px;width:351.3px;height:36.0px;background:#dfdfdf;"></div>
<div class="t" style="top:494.2px;font-size:25px;color:#262626;left:3555.0px;">-</div>
<div class="r" style="left:45.0px;top:528.1px;width:110.3px;height:36.0px;background:#dfdfdf;"></div>
<div class="t" style="top:532.1px;font-size:25px;color:#262626;transform:scaleX(0.93);transform-origin:center 0;left:-384.0px;width:1000px;text-align:center;">28</div>
<div class="r" style="left:157.2px;top:528.1px;width:308.6px;height:36.0px;background:#f9f9f9;"></div>
<div class="t" style="top:532.1px;font-size:25px;color:#262626;transform:scaleX(1.03);transform-origin:left 0;left:169.8px;">COMMON</div>
<div class="r" style="left:467.8px;top:528.1px;width:411.5px;height:36.0px;background:#f9f9f9;"></div>
<div class="t" style="top:532.1px;font-size:25px;color:#262626;transform:scaleX(0.84);transform-origin:left 0;left:477.5px;">SET</div>
<div class="r" style="left:881.2px;top:528.1px;width:875.8px;height:36.0px;background:#f9f9f9;"></div>
<div class="t" style="top:532.1px;font-size:25px;color:#262626;transform:scaleX(0.965);transform-origin:left 0;left:892.9px;">Set Active</div>
<div class="r" style="left:1757.8px;top:528.1px;width:189.4px;height:36.0px;background:#dfdfdf;"></div>
<div class="r" style="left:1949.5px;top:528.1px;width:557.1px;height:36.0px;background:#f9f9f9;"></div>
<div class="r" style="left:1949.5px;top:528.1px;width:557.1px;height:36.0px;overflow:hidden;">
<div class="t" style="top:4px;right:14.6px;font-size:25px;color:#262626;">F</div></div>
<div class="r" style="left:2507.8px;top:528.1px;width:176.2px;height:36.0px;background:#dfdfdf;"></div>
<div class="r" style="left:2507.8px;top:528.1px;width:176.2px;height:36.0px;overflow:hidden;">
<div class="t" style="top:4px;right:14.0px;font-size:25px;color:#262626;">-</div></div>
<div class="r" style="left:2686.0px;top:528.1px;width:160.3px;height:36.0px;background:#f9f9f9;"></div>
<div class="r" style="left:2686.0px;top:528.1px;width:160.3px;height:36.0px;overflow:hidden;">
<div class="t" style="top:4px;right:12.3px;font-size:25px;color:#262626;transform:scaleX(1.09);transform-origin:right 0;">Inf</div></div>
<div class="r" style="left:2848.0px;top:528.1px;width:154.5px;height:36.0px;background:#f9f9f9;"></div>
<div class="r" style="left:2848.0px;top:528.1px;width:154.5px;height:36.0px;overflow:hidden;">
<div class="t" style="top:4px;right:13.5px;font-size:25px;color:#262626;transform:scaleX(1.07);transform-origin:right 0;">-Inf</div></div>
<div class="r" style="left:3003.9px;top:528.1px;width:246.5px;height:36.0px;background:#dfdfdf;"></div>
<div class="r" style="left:3003.9px;top:528.1px;width:246.5px;height:36.0px;overflow:hidden;">
<div class="t" style="top:4px;right:13.6px;font-size:25px;color:#262626;transform:scaleX(0.905);transform-origin:right 0;">28.01.2026 16:28:13</div></div>
<div class="r" style="left:3252.0px;top:528.1px;width:289.5px;height:36.0px;background:#f9f9f9;"></div>
<div class="r" style="left:3252.0px;top:528.1px;width:289.5px;height:36.0px;overflow:hidden;">
<div class="t" style="top:4px;right:13.5px;font-size:25px;color:#262626;">No New Value Available</div></div>
<div class="r" style="left:3543.5px;top:528.1px;width:351.3px;height:36.0px;background:#dfdfdf;"></div>
<div class="t" style="top:532.1px;font-size:25px;color:#262626;left:3555.0px;">-</div>
<div class="r" style="left:45.0px;top:566.0px;width:110.3px;height:36.0px;background:#dfdfdf;"></div>
<div class="t" style="top:570.0px;font-size:25px;color:#262626;transform:scaleX(0.93);transform-origin:center 0;left:-384.0px;width:1000px;text-align:center;">29</div>
<div class="r" style="left:157.2px;top:566.0px;width:308.6px;height:36.0px;background:#f9f9f9;"></div>
<div class="t" style="top:570.0px;font-size:25px;color:#262626;transform:scaleX(1.03);transform-origin:left 0;left:169.8px;">COMMON</div>
<div class="r" style="left:467.8px;top:566.0px;width:411.5px;height:36.0px;background:#f9f9f9;"></div>
<div class="t" style="top:570.0px;font-size:25px;color:#262626;transform:scaleX(0.84);transform-origin:left 0;left:477.5px;">SET</div>
<div class="r" style="left:881.2px;top:566.0px;width:875.8px;height:36.0px;background:#f9f9f9;"></div>
<div class="t" style="top:570.0px;font-size:25px;color:#262626;transform:scaleX(0.965);transform-origin:left 0;left:892.9px;">Set Active (s)</div>
<div class="r" style="left:1757.8px;top:566.0px;width:189.4px;height:36.0px;background:#dfdfdf;"></div>
<div class="r" style="left:1949.5px;top:566.0px;width:557.1px;height:36.0px;background:#f9f9f9;"></div>
<div class="r" style="left:1949.5px;top:566.0px;width:557.1px;height:36.0px;overflow:hidden;">
<div class="t" style="top:4px;right:14.6px;font-size:25px;color:#262626;transform:scaleX(0.93);transform-origin:right 0;">0.000</div></div>
<div class="r" style="left:2507.8px;top:566.0px;width:176.2px;height:36.0px;background:#dfdfdf;"></div>
<div class="r" style="left:2507.8px;top:566.0px;width:176.2px;height:36.0px;overflow:hidden;">
<div class="t" style="top:4px;right:14.0px;font-size:25px;color:#262626;">-</div></div>
<div class="r" style="left:2686.0px;top:566.0px;width:160.3px;height:36.0px;background:#f9f9f9;"></div>
<div class="r" style="left:2686.0px;top:566.0px;width:160.3px;height:36.0px;overflow:hidden;">
<div class="t" style="top:4px;right:12.3px;font-size:25px;color:#262626;transform:scaleX(1.09);transform-origin:right 0;">Inf</div></div>
<div class="r" style="left:2848.0px;top:566.0px;width:154.5px;height:36.0px;background:#f9f9f9;"></div>
<div class="r" style="left:2848.0px;top:566.0px;width:154.5px;height:36.0px;overflow:hidden;">
<div class="t" style="top:4px;right:13.5px;font-size:25px;color:#262626;transform:scaleX(1.07);transform-origin:right 0;">-Inf</div></div>
<div class="r" style="left:3003.9px;top:566.0px;width:246.5px;height:36.0px;background:#dfdfdf;"></div>
<div class="r" style="left:3003.9px;top:566.0px;width:246.5px;height:36.0px;overflow:hidden;">
<div class="t" style="top:4px;right:13.6px;font-size:25px;color:#262626;transform:scaleX(0.905);transform-origin:right 0;">28.01.2026 16:28:13</div></div>
<div class="r" style="left:3252.0px;top:566.0px;width:289.5px;height:36.0px;background:#f9f9f9;"></div>
<div class="r" style="left:3252.0px;top:566.0px;width:289.5px;height:36.0px;overflow:hidden;">
<div class="t" style="top:4px;right:13.5px;font-size:25px;color:#262626;">No New Value Available</div></div>
<div class="r" style="left:3543.5px;top:566.0px;width:351.3px;height:36.0px;background:#dfdfdf;"></div>
<div class="t" style="top:570.0px;font-size:25px;color:#262626;left:3555.0px;">-</div>
<div class="r" style="left:45.0px;top:603.9px;width:110.3px;height:36.0px;background:#dfdfdf;"></div>
<div class="t" style="top:607.9px;font-size:25px;color:#262626;transform:scaleX(0.93);transform-origin:center 0;left:-384.0px;width:1000px;text-align:center;">30</div>
<div class="r" style="left:157.2px;top:603.9px;width:308.6px;height:36.0px;background:#f9f9f9;"></div>
<div class="t" style="top:607.9px;font-size:25px;color:#262626;transform:scaleX(1.03);transform-origin:left 0;left:169.8px;">COMMON</div>
<div class="r" style="left:467.8px;top:603.9px;width:411.5px;height:36.0px;background:#f9f9f9;"></div>
<div class="t" style="top:607.9px;font-size:25px;color:#262626;transform:scaleX(0.84);transform-origin:left 0;left:477.5px;">SET</div>
<div class="r" style="left:881.2px;top:603.9px;width:875.8px;height:36.0px;background:#f9f9f9;"></div>
<div class="t" style="top:607.9px;font-size:25px;color:#262626;transform:scaleX(0.965);transform-origin:left 0;left:892.9px;">Set Is Correct</div>
<div class="r" style="left:1757.8px;top:603.9px;width:189.4px;height:36.0px;background:#dfdfdf;"></div>
<div class="r" style="left:1949.5px;top:603.9px;width:557.1px;height:36.0px;background:#f9f9f9;"></div>
<div class="r" style="left:1949.5px;top:603.9px;width:557.1px;height:36.0px;overflow:hidden;">
<div class="t" style="top:4px;right:14.6px;font-size:25px;color:#262626;">T</div></div>
<div class="r" style="left:2507.8px;top:603.9px;width:176.2px;height:36.0px;background:#dfdfdf;"></div>
<div class="r" style="left:2507.8px;top:603.9px;width:176.2px;height:36.0px;overflow:hidden;">
<div class="t" style="top:4px;right:14.0px;font-size:25px;color:#262626;">-</div></div>
<div class="r" style="left:2686.0px;top:603.9px;width:160.3px;height:36.0px;background:#f9f9f9;"></div>
<div class="r" style="left:2686.0px;top:603.9px;width:160.3px;height:36.0px;overflow:hidden;">
<div class="t" style="top:4px;right:12.3px;font-size:25px;color:#262626;transform:scaleX(0.93);transform-origin:right 0;">0.000</div></div>
<div class="r" style="left:2848.0px;top:603.9px;width:154.5px;height:36.0px;background:#f9f9f9;"></div>
<div class="r" style="left:2848.0px;top:603.9px;width:154.5px;height:36.0px;overflow:hidden;">
<div class="t" style="top:4px;right:13.5px;font-size:25px;color:#262626;transform:scaleX(0.93);transform-origin:right 0;">1.000</div></div>
<div class="r" style="left:3003.9px;top:603.9px;width:246.5px;height:36.0px;background:#dfdfdf;"></div>
<div class="r" style="left:3003.9px;top:603.9px;width:246.5px;height:36.0px;overflow:hidden;">
<div class="t" style="top:4px;right:13.6px;font-size:25px;color:#262626;transform:scaleX(0.905);transform-origin:right 0;">28.01.2026 16:46:38</div></div>
<div class="r" style="left:3252.0px;top:603.9px;width:289.5px;height:36.0px;background:#f9f9f9;"></div>
<div class="r" style="left:3252.0px;top:603.9px;width:289.5px;height:36.0px;overflow:hidden;">
<div class="t" style="top:4px;right:13.5px;font-size:25px;color:#262626;">No New Value Available</div></div>
<div class="r" style="left:3543.5px;top:603.9px;width:351.3px;height:36.0px;background:#dfdfdf;"></div>
<div class="t" style="top:607.9px;font-size:25px;color:#262626;left:3555.0px;">-</div>
<div class="r" style="left:45.0px;top:641.8px;width:110.3px;height:36.0px;background:#dfdfdf;"></div>
<div class="t" style="top:645.8px;font-size:25px;color:#262626;transform:scaleX(0.93);transform-origin:center 0;left:-384.0px;width:1000px;text-align:center;">31</div>
<div class="r" style="left:157.2px;top:641.8px;width:308.6px;height:36.0px;background:#f9f9f9;"></div>
<div class="t" style="top:645.8px;font-size:25px;color:#262626;transform:scaleX(1.03);transform-origin:left 0;left:169.8px;">COMMON</div>
<div class="r" style="left:467.8px;top:641.8px;width:411.5px;height:36.0px;background:#f9f9f9;"></div>
<div class="t" style="top:645.8px;font-size:25px;color:#262626;transform:scaleX(0.84);transform-origin:left 0;left:477.5px;">SET</div>
<div class="r" style="left:881.2px;top:641.8px;width:875.8px;height:36.0px;background:#f9f9f9;"></div>
<div class="t" style="top:645.8px;font-size:25px;color:#262626;transform:scaleX(0.965);transform-origin:left 0;left:892.9px;">Is Stop Set defined</div>
<div class="r" style="left:1757.8px;top:641.8px;width:189.4px;height:36.0px;background:#dfdfdf;"></div>
<div class="r" style="left:1949.5px;top:641.8px;width:557.1px;height:36.0px;background:#f9f9f9;"></div>
<div class="r" style="left:1949.5px;top:641.8px;width:557.1px;height:36.0px;overflow:hidden;">
<div class="t" style="top:4px;right:14.6px;font-size:25px;color:#262626;">F</div></div>
<div class="r" style="left:2507.8px;top:641.8px;width:176.2px;height:36.0px;background:#dfdfdf;"></div>
<div class="r" style="left:2507.8px;top:641.8px;width:176.2px;height:36.0px;overflow:hidden;">
<div class="t" style="top:4px;right:14.0px;font-size:25px;color:#262626;">-</div></div>
<div class="r" style="left:2686.0px;top:641.8px;width:160.3px;height:36.0px;background:#f9f9f9;"></div>
<div class="r" style="left:2686.0px;top:641.8px;width:160.3px;height:36.0px;overflow:hidden;">
<div class="t" style="top:4px;right:12.3px;font-size:25px;color:#262626;transform:scaleX(1.09);transform-origin:right 0;">Inf</div></div>
<div class="r" style="left:2848.0px;top:641.8px;width:154.5px;height:36.0px;background:#f9f9f9;"></div>
<div class="r" style="left:2848.0px;top:641.8px;width:154.5px;height:36.0px;overflow:hidden;">
<div class="t" style="top:4px;right:13.5px;font-size:25px;color:#262626;transform:scaleX(1.07);transform-origin:right 0;">-Inf</div></div>
<div class="r" style="left:3003.9px;top:641.8px;width:246.5px;height:36.0px;background:#dfdfdf;"></div>
<div class="r" style="left:3003.9px;top:641.8px;width:246.5px;height:36.0px;overflow:hidden;">
<div class="t" style="top:4px;right:13.6px;font-size:25px;color:#262626;transform:scaleX(0.905);transform-origin:right 0;">28.01.2026 16:28:13</div></div>
<div class="r" style="left:3252.0px;top:641.8px;width:289.5px;height:36.0px;background:#f9f9f9;"></div>
<div class="r" style="left:3252.0px;top:641.8px;width:289.5px;height:36.0px;overflow:hidden;">
<div class="t" style="top:4px;right:13.5px;font-size:25px;color:#262626;">No New Value Available</div></div>
<div class="r" style="left:3543.5px;top:641.8px;width:351.3px;height:36.0px;background:#dfdfdf;"></div>
<div class="t" style="top:645.8px;font-size:25px;color:#262626;left:3555.0px;">-</div>
<div class="r" style="left:45.0px;top:679.6px;width:110.3px;height:36.0px;background:#dfdfdf;"></div>
<div class="t" style="top:683.6px;font-size:25px;color:#262626;transform:scaleX(0.93);transform-origin:center 0;left:-384.0px;width:1000px;text-align:center;">32</div>
<div class="r" style="left:157.2px;top:679.6px;width:308.6px;height:36.0px;background:#f9f9f9;"></div>
<div class="t" style="top:683.6px;font-size:25px;color:#262626;transform:scaleX(1.03);transform-origin:left 0;left:169.8px;">COMMON</div>
<div class="r" style="left:467.8px;top:679.6px;width:411.5px;height:36.0px;background:#f9f9f9;"></div>
<div class="t" style="top:683.6px;font-size:25px;color:#262626;transform:scaleX(0.84);transform-origin:left 0;left:477.5px;">SET</div>
<div class="r" style="left:881.2px;top:679.6px;width:875.8px;height:36.0px;background:#f9f9f9;"></div>
<div class="t" style="top:683.6px;font-size:25px;color:#262626;transform:scaleX(0.965);transform-origin:left 0;left:892.9px;">Is Paused</div>
<div class="r" style="left:1757.8px;top:679.6px;width:189.4px;height:36.0px;background:#dfdfdf;"></div>
<div class="r" style="left:1949.5px;top:679.6px;width:557.1px;height:36.0px;background:#f9f9f9;"></div>
<div class="r" style="left:1949.5px;top:679.6px;width:557.1px;height:36.0px;overflow:hidden;">
<div class="t" style="top:4px;right:14.6px;font-size:25px;color:#262626;">F</div></div>
<div class="r" style="left:2507.8px;top:679.6px;width:176.2px;height:36.0px;background:#dfdfdf;"></div>
<div class="r" style="left:2507.8px;top:679.6px;width:176.2px;height:36.0px;overflow:hidden;">
<div class="t" style="top:4px;right:14.0px;font-size:25px;color:#262626;">-</div></div>
<div class="r" style="left:2686.0px;top:679.6px;width:160.3px;height:36.0px;background:#f9f9f9;"></div>
<div class="r" style="left:2686.0px;top:679.6px;width:160.3px;height:36.0px;overflow:hidden;">
<div class="t" style="top:4px;right:12.3px;font-size:25px;color:#262626;transform:scaleX(1.09);transform-origin:right 0;">Inf</div></div>
<div class="r" style="left:2848.0px;top:679.6px;width:154.5px;height:36.0px;background:#f9f9f9;"></div>
<div class="r" style="left:2848.0px;top:679.6px;width:154.5px;height:36.0px;overflow:hidden;">
<div class="t" style="top:4px;right:13.5px;font-size:25px;color:#262626;transform:scaleX(1.07);transform-origin:right 0;">-Inf</div></div>
<div class="r" style="left:3003.9px;top:679.6px;width:246.5px;height:36.0px;background:#dfdfdf;"></div>
<div class="r" style="left:3003.9px;top:679.6px;width:246.5px;height:36.0px;overflow:hidden;">
<div class="t" style="top:4px;right:13.6px;font-size:25px;color:#262626;transform:scaleX(0.905);transform-origin:right 0;">28.01.2026 16:28:13</div></div>
<div class="r" style="left:3252.0px;top:679.6px;width:289.5px;height:36.0px;background:#f9f9f9;"></div>
<div class="r" style="left:3252.0px;top:679.6px;width:289.5px;height:36.0px;overflow:hidden;">
<div class="t" style="top:4px;right:13.5px;font-size:25px;color:#262626;">No New Value Available</div></div>
<div class="r" style="left:3543.5px;top:679.6px;width:351.3px;height:36.0px;background:#dfdfdf;"></div>
<div class="t" style="top:683.6px;font-size:25px;color:#262626;left:3555.0px;">-</div>
<div class="r" style="left:45.0px;top:717.5px;width:110.3px;height:36.0px;background:#dfdfdf;"></div>
<div class="t" style="top:721.5px;font-size:25px;color:#262626;transform:scaleX(0.93);transform-origin:center 0;left:-384.0px;width:1000px;text-align:center;">33</div>
<div class="r" style="left:157.2px;top:717.5px;width:308.6px;height:36.0px;background:#f9f9f9;"></div>
<div class="t" style="top:721.5px;font-size:25px;color:#262626;transform:scaleX(1.03);transform-origin:left 0;left:169.8px;">COMMON</div>
<div class="r" style="left:467.8px;top:717.5px;width:411.5px;height:36.0px;background:#f9f9f9;"></div>
<div class="t" style="top:721.5px;font-size:25px;color:#262626;transform:scaleX(0.84);transform-origin:left 0;left:477.5px;">SET</div>
<div class="r" style="left:881.2px;top:717.5px;width:875.8px;height:36.0px;background:#f9f9f9;"></div>
<div class="t" style="top:721.5px;font-size:25px;color:#262626;transform:scaleX(0.965);transform-origin:left 0;left:892.9px;">User Parameter 1</div>
<div class="r" style="left:1757.8px;top:717.5px;width:189.4px;height:36.0px;background:#dfdfdf;"></div>
<div class="r" style="left:1949.5px;top:717.5px;width:557.1px;height:36.0px;background:#f9f9f9;"></div>
<div class="r" style="left:2507.8px;top:717.5px;width:176.2px;height:36.0px;background:#dfdfdf;"></div>
<div class="r" style="left:2507.8px;top:717.5px;width:176.2px;height:36.0px;overflow:hidden;">
<div class="t" style="top:4px;right:14.0px;font-size:25px;color:#262626;">-</div></div>
<div class="r" style="left:2686.0px;top:717.5px;width:160.3px;height:36.0px;background:#f9f9f9;"></div>
<div class="r" style="left:2686.0px;top:717.5px;width:160.3px;height:36.0px;overflow:hidden;">
<div class="t" style="top:4px;right:12.3px;font-size:25px;color:#262626;transform:scaleX(1.09);transform-origin:right 0;">Inf</div></div>
<div class="r" style="left:2848.0px;top:717.5px;width:154.5px;height:36.0px;background:#f9f9f9;"></div>
<div class="r" style="left:2848.0px;top:717.5px;width:154.5px;height:36.0px;overflow:hidden;">
<div class="t" style="top:4px;right:13.5px;font-size:25px;color:#262626;transform:scaleX(1.07);transform-origin:right 0;">-Inf</div></div>
<div class="r" style="left:3003.9px;top:717.5px;width:246.5px;height:36.0px;background:#dfdfdf;"></div>
<div class="r" style="left:3003.9px;top:717.5px;width:246.5px;height:36.0px;overflow:hidden;">
<div class="t" style="top:4px;right:13.6px;font-size:25px;color:#262626;transform:scaleX(0.905);transform-origin:right 0;">28.01.2026 16:28:13</div></div>
<div class="r" style="left:3252.0px;top:717.5px;width:289.5px;height:36.0px;background:#f9f9f9;"></div>
<div class="r" style="left:3252.0px;top:717.5px;width:289.5px;height:36.0px;overflow:hidden;">
<div class="t" style="top:4px;right:13.5px;font-size:25px;color:#262626;">No New Value Available</div></div>
<div class="r" style="left:3543.5px;top:717.5px;width:351.3px;height:36.0px;background:#dfdfdf;"></div>
<div class="t" style="top:721.5px;font-size:25px;color:#262626;left:3555.0px;">-</div>
<div class="r" style="left:45.0px;top:755.4px;width:110.3px;height:36.0px;background:#dfdfdf;"></div>
<div class="t" style="top:759.4px;font-size:25px;color:#262626;transform:scaleX(0.93);transform-origin:center 0;left:-384.0px;width:1000px;text-align:center;">34</div>
<div class="r" style="left:157.2px;top:755.4px;width:308.6px;height:36.0px;background:#f9f9f9;"></div>
<div class="t" style="top:759.4px;font-size:25px;color:#262626;transform:scaleX(1.03);transform-origin:left 0;left:169.8px;">COMMON</div>
<div class="r" style="left:467.8px;top:755.4px;width:411.5px;height:36.0px;background:#f9f9f9;"></div>
<div class="t" style="top:759.4px;font-size:25px;color:#262626;transform:scaleX(0.84);transform-origin:left 0;left:477.5px;">SET</div>
<div class="r" style="left:881.2px;top:755.4px;width:875.8px;height:36.0px;background:#f9f9f9;"></div>
<div class="t" style="top:759.4px;font-size:25px;color:#262626;transform:scaleX(0.965);transform-origin:left 0;left:892.9px;">User Parameter 2</div>
<div class="r" style="left:1757.8px;top:755.4px;width:189.4px;height:36.0px;background:#dfdfdf;"></div>
<div class="r" style="left:1949.5px;top:755.4px;width:557.1px;height:36.0px;background:#f9f9f9;"></div>
<div class="r" style="left:2507.8px;top:755.4px;width:176.2px;height:36.0px;background:#dfdfdf;"></div>
<div class="r" style="left:2507.8px;top:755.4px;width:176.2px;height:36.0px;overflow:hidden;">
<div class="t" style="top:4px;right:14.0px;font-size:25px;color:#262626;">-</div></div>
<div class="r" style="left:2686.0px;top:755.4px;width:160.3px;height:36.0px;background:#f9f9f9;"></div>
<div class="r" style="left:2686.0px;top:755.4px;width:160.3px;height:36.0px;overflow:hidden;">
<div class="t" style="top:4px;right:12.3px;font-size:25px;color:#262626;transform:scaleX(1.09);transform-origin:right 0;">Inf</div></div>
<div class="r" style="left:2848.0px;top:755.4px;width:154.5px;height:36.0px;background:#f9f9f9;"></div>
<div class="r" style="left:2848.0px;top:755.4px;width:154.5px;height:36.0px;overflow:hidden;">
<div class="t" style="top:4px;right:13.5px;font-size:25px;color:#262626;transform:scaleX(1.07);transform-origin:right 0;">-Inf</div></div>
<div class="r" style="left:3003.9px;top:755.4px;width:246.5px;height:36.0px;background:#dfdfdf;"></div>
<div class="r" style="left:3003.9px;top:755.4px;width:246.5px;height:36.0px;overflow:hidden;">
<div class="t" style="top:4px;right:13.6px;font-size:25px;color:#262626;transform:scaleX(0.905);transform-origin:right 0;">28.01.2026 16:28:13</div></div>
<div class="r" style="left:3252.0px;top:755.4px;width:289.5px;height:36.0px;background:#f9f9f9;"></div>
<div class="r" style="left:3252.0px;top:755.4px;width:289.5px;height:36.0px;overflow:hidden;">
<div class="t" style="top:4px;right:13.5px;font-size:25px;color:#262626;">No New Value Available</div></div>
<div class="r" style="left:3543.5px;top:755.4px;width:351.3px;height:36.0px;background:#dfdfdf;"></div>
<div class="t" style="top:759.4px;font-size:25px;color:#262626;left:3555.0px;">-</div>
<div class="r" style="left:45.0px;top:793.3px;width:110.3px;height:36.0px;background:#dfdfdf;"></div>
<div class="t" style="top:797.3px;font-size:25px;color:#262626;transform:scaleX(0.93);transform-origin:center 0;left:-384.0px;width:1000px;text-align:center;">35</div>
<div class="r" style="left:157.2px;top:793.3px;width:308.6px;height:36.0px;background:#f9f9f9;"></div>
<div class="t" style="top:797.3px;font-size:25px;color:#262626;transform:scaleX(1.03);transform-origin:left 0;left:169.8px;">COMMON</div>
<div class="r" style="left:467.8px;top:793.3px;width:411.5px;height:36.0px;background:#f9f9f9;"></div>
<div class="t" style="top:797.3px;font-size:25px;color:#262626;transform:scaleX(0.84);transform-origin:left 0;left:477.5px;">SET</div>
<div class="r" style="left:881.2px;top:793.3px;width:875.8px;height:36.0px;background:#f9f9f9;"></div>
<div class="t" style="top:797.3px;font-size:25px;color:#262626;transform:scaleX(0.965);transform-origin:left 0;left:892.9px;">User Parameter 3</div>
<div class="r" style="left:1757.8px;top:793.3px;width:189.4px;height:36.0px;background:#dfdfdf;"></div>
<div class="r" style="left:1949.5px;top:793.3px;width:557.1px;height:36.0px;background:#f9f9f9;"></div>
<div class="r" style="left:2507.8px;top:793.3px;width:176.2px;height:36.0px;background:#dfdfdf;"></div>
<div class="r" style="left:2507.8px;top:793.3px;width:176.2px;height:36.0px;overflow:hidden;">
<div class="t" style="top:4px;right:14.0px;font-size:25px;color:#262626;">-</div></div>
<div class="r" style="left:2686.0px;top:793.3px;width:160.3px;height:36.0px;background:#f9f9f9;"></div>
<div class="r" style="left:2686.0px;top:793.3px;width:160.3px;height:36.0px;overflow:hidden;">
<div class="t" style="top:4px;right:12.3px;font-size:25px;color:#262626;transform:scaleX(1.09);transform-origin:right 0;">Inf</div></div>
<div class="r" style="left:2848.0px;top:793.3px;width:154.5px;height:36.0px;background:#f9f9f9;"></div>
<div class="r" style="left:2848.0px;top:793.3px;width:154.5px;height:36.0px;overflow:hidden;">
<div class="t" style="top:4px;right:13.5px;font-size:25px;color:#262626;transform:scaleX(1.07);transform-origin:right 0;">-Inf</div></div>
<div class="r" style="left:3003.9px;top:793.3px;width:246.5px;height:36.0px;background:#dfdfdf;"></div>
<div class="r" style="left:3003.9px;top:793.3px;width:246.5px;height:36.0px;overflow:hidden;">
<div class="t" style="top:4px;right:13.6px;font-size:25px;color:#262626;transform:scaleX(0.905);transform-origin:right 0;">28.01.2026 16:28:13</div></div>
<div class="r" style="left:3252.0px;top:793.3px;width:289.5px;height:36.0px;background:#f9f9f9;"></div>
<div class="r" style="left:3252.0px;top:793.3px;width:289.5px;height:36.0px;overflow:hidden;">
<div class="t" style="top:4px;right:13.5px;font-size:25px;color:#262626;">No New Value Available</div></div>
<div class="r" style="left:3543.5px;top:793.3px;width:351.3px;height:36.0px;background:#dfdfdf;"></div>
<div class="t" style="top:797.3px;font-size:25px;color:#262626;left:3555.0px;">-</div>
<div class="r" style="left:45.0px;top:831.2px;width:110.3px;height:36.0px;background:#dfdfdf;"></div>
<div class="t" style="top:835.2px;font-size:25px;color:#262626;transform:scaleX(0.93);transform-origin:center 0;left:-384.0px;width:1000px;text-align:center;">36</div>
<div class="r" style="left:157.2px;top:831.2px;width:308.6px;height:36.0px;background:#f9f9f9;"></div>
<div class="t" style="top:835.2px;font-size:25px;color:#262626;transform:scaleX(1.03);transform-origin:left 0;left:169.8px;">COMMON</div>
<div class="r" style="left:467.8px;top:831.2px;width:411.5px;height:36.0px;background:#f9f9f9;"></div>
<div class="t" style="top:835.2px;font-size:25px;color:#262626;transform:scaleX(0.84);transform-origin:left 0;left:477.5px;">SET</div>
<div class="r" style="left:881.2px;top:831.2px;width:875.8px;height:36.0px;background:#f9f9f9;"></div>
<div class="t" style="top:835.2px;font-size:25px;color:#262626;transform:scaleX(0.965);transform-origin:left 0;left:892.9px;">User Parameter 4</div>
<div class="r" style="left:1757.8px;top:831.2px;width:189.4px;height:36.0px;background:#dfdfdf;"></div>
<div class="r" style="left:1949.5px;top:831.2px;width:557.1px;height:36.0px;background:#f9f9f9;"></div>
<div class="r" style="left:2507.8px;top:831.2px;width:176.2px;height:36.0px;background:#dfdfdf;"></div>
<div class="r" style="left:2507.8px;top:831.2px;width:176.2px;height:36.0px;overflow:hidden;">
<div class="t" style="top:4px;right:14.0px;font-size:25px;color:#262626;">-</div></div>
<div class="r" style="left:2686.0px;top:831.2px;width:160.3px;height:36.0px;background:#f9f9f9;"></div>
<div class="r" style="left:2686.0px;top:831.2px;width:160.3px;height:36.0px;overflow:hidden;">
<div class="t" style="top:4px;right:12.3px;font-size:25px;color:#262626;transform:scaleX(1.09);transform-origin:right 0;">Inf</div></div>
<div class="r" style="left:2848.0px;top:831.2px;width:154.5px;height:36.0px;background:#f9f9f9;"></div>
<div class="r" style="left:2848.0px;top:831.2px;width:154.5px;height:36.0px;overflow:hidden;">
<div class="t" style="top:4px;right:13.5px;font-size:25px;color:#262626;transform:scaleX(1.07);transform-origin:right 0;">-Inf</div></div>
<div class="r" style="left:3003.9px;top:831.2px;width:246.5px;height:36.0px;background:#dfdfdf;"></div>
<div class="r" style="left:3003.9px;top:831.2px;width:246.5px;height:36.0px;overflow:hidden;">
<div class="t" style="top:4px;right:13.6px;font-size:25px;color:#262626;transform:scaleX(0.905);transform-origin:right 0;">28.01.2026 16:28:13</div></div>
<div class="r" style="left:3252.0px;top:831.2px;width:289.5px;height:36.0px;background:#f9f9f9;"></div>
<div class="r" style="left:3252.0px;top:831.2px;width:289.5px;height:36.0px;overflow:hidden;">
<div class="t" style="top:4px;right:13.5px;font-size:25px;color:#262626;">No New Value Available</div></div>
<div class="r" style="left:3543.5px;top:831.2px;width:351.3px;height:36.0px;background:#dfdfdf;"></div>
<div class="t" style="top:835.2px;font-size:25px;color:#262626;left:3555.0px;">-</div>
<div class="r" style="left:45.0px;top:869.1px;width:110.3px;height:36.0px;background:#dfdfdf;"></div>
<div class="t" style="top:873.1px;font-size:25px;color:#262626;transform:scaleX(0.93);transform-origin:center 0;left:-384.0px;width:1000px;text-align:center;">37</div>
<div class="r" style="left:157.2px;top:869.1px;width:308.6px;height:36.0px;background:#f9f9f9;"></div>
<div class="t" style="top:873.1px;font-size:25px;color:#262626;transform:scaleX(1.03);transform-origin:left 0;left:169.8px;">COMMON</div>
<div class="r" style="left:467.8px;top:869.1px;width:411.5px;height:36.0px;background:#f9f9f9;"></div>
<div class="t" style="top:873.1px;font-size:25px;color:#262626;transform:scaleX(0.84);transform-origin:left 0;left:477.5px;">SET</div>
<div class="r" style="left:881.2px;top:869.1px;width:875.8px;height:36.0px;background:#f9f9f9;"></div>
<div class="t" style="top:873.1px;font-size:25px;color:#262626;transform:scaleX(0.965);transform-origin:left 0;left:892.9px;">Sequence File Error</div>
<div class="r" style="left:1757.8px;top:869.1px;width:189.4px;height:36.0px;background:#dfdfdf;"></div>
<div class="r" style="left:1949.5px;top:869.1px;width:557.1px;height:36.0px;background:#f9f9f9;"></div>
<div class="r" style="left:1949.5px;top:869.1px;width:557.1px;height:36.0px;overflow:hidden;">
<div class="t" style="top:4px;right:14.6px;font-size:25px;color:#262626;">F</div></div>
<div class="r" style="left:2507.8px;top:869.1px;width:176.2px;height:36.0px;background:#dfdfdf;"></div>
<div class="r" style="left:2507.8px;top:869.1px;width:176.2px;height:36.0px;overflow:hidden;">
<div class="t" style="top:4px;right:14.0px;font-size:25px;color:#262626;">-</div></div>
<div class="r" style="left:2686.0px;top:869.1px;width:160.3px;height:36.0px;background:#f9f9f9;"></div>
<div class="r" style="left:2686.0px;top:869.1px;width:160.3px;height:36.0px;overflow:hidden;">
<div class="t" style="top:4px;right:12.3px;font-size:25px;color:#262626;transform:scaleX(0.93);transform-origin:right 0;">0.000</div></div>
<div class="r" style="left:2848.0px;top:869.1px;width:154.5px;height:36.0px;background:#f9f9f9;"></div>
<div class="r" style="left:2848.0px;top:869.1px;width:154.5px;height:36.0px;overflow:hidden;">
<div class="t" style="top:4px;right:13.5px;font-size:25px;color:#262626;transform:scaleX(0.93);transform-origin:right 0;">0.000</div></div>
<div class="r" style="left:3003.9px;top:869.1px;width:246.5px;height:36.0px;background:#dfdfdf;"></div>
<div class="r" style="left:3003.9px;top:869.1px;width:246.5px;height:36.0px;overflow:hidden;">
<div class="t" style="top:4px;right:13.6px;font-size:25px;color:#262626;transform:scaleX(0.905);transform-origin:right 0;">28.01.2026 16:39:03</div></div>
<div class="r" style="left:3252.0px;top:869.1px;width:289.5px;height:36.0px;background:#f9f9f9;"></div>
<div class="r" style="left:3252.0px;top:869.1px;width:289.5px;height:36.0px;overflow:hidden;">
<div class="t" style="top:4px;right:13.5px;font-size:25px;color:#262626;">No New Value Available</div></div>
<div class="r" style="left:3543.5px;top:869.1px;width:351.3px;height:36.0px;background:#dfdfdf;"></div>
<div class="t" style="top:873.1px;font-size:25px;color:#262626;left:3555.0px;">-</div>
<div class="r" style="left:45.0px;top:907.0px;width:110.3px;height:36.0px;background:#dfdfdf;"></div>
<div class="t" style="top:911.0px;font-size:25px;color:#262626;transform:scaleX(0.93);transform-origin:center 0;left:-384.0px;width:1000px;text-align:center;">67</div>
<div class="r" style="left:157.2px;top:907.0px;width:308.6px;height:36.0px;background:#f9f9f9;"></div>
<div class="t" style="top:911.0px;font-size:25px;color:#262626;transform:scaleX(1.03);transform-origin:left 0;left:169.8px;">COMMON</div>
<div class="r" style="left:467.8px;top:907.0px;width:411.5px;height:36.0px;background:#f9f9f9;"></div>
<div class="t" style="top:911.0px;font-size:25px;color:#262626;left:477.5px;">AO</div>
<div class="r" style="left:881.2px;top:907.0px;width:875.8px;height:36.0px;background:#f9f9f9;"></div>
<div class="t" style="top:911.0px;font-size:25px;color:#262626;transform:scaleX(0.86);transform-origin:left 0;left:892.9px;">PR3_010</div>
<div class="r" style="left:1757.8px;top:907.0px;width:189.4px;height:36.0px;background:#dfdfdf;"></div>
<div class="t" style="top:911.0px;font-size:25px;color:#262626;left:1352.4px;width:1000px;text-align:center;">V</div>
<div class="r" style="left:1949.5px;top:907.0px;width:557.1px;height:36.0px;background:#f9f9f9;"></div>
<div class="r" style="left:1949.5px;top:907.0px;width:557.1px;height:36.0px;overflow:hidden;">
<div class="t" style="top:4px;right:14.6px;font-size:25px;color:#262626;transform:scaleX(0.93);transform-origin:right 0;">2.560</div></div>
<div class="r" style="left:2507.8px;top:907.0px;width:176.2px;height:36.0px;background:#dfdfdf;"></div>
<div class="r" style="left:2507.8px;top:907.0px;width:176.2px;height:36.0px;overflow:hidden;">
<div class="t" style="top:4px;right:14.0px;font-size:25px;color:#262626;">-</div></div>
<div class="r" style="left:2686.0px;top:907.0px;width:160.3px;height:36.0px;background:#f9f9f9;"></div>
<div class="r" style="left:2686.0px;top:907.0px;width:160.3px;height:36.0px;overflow:hidden;">
<div class="t" style="top:4px;right:12.3px;font-size:25px;color:#262626;transform:scaleX(0.93);transform-origin:right 0;">0.000</div></div>
<div class="r" style="left:2848.0px;top:907.0px;width:154.5px;height:36.0px;background:#f9f9f9;"></div>
<div class="r" style="left:2848.0px;top:907.0px;width:154.5px;height:36.0px;overflow:hidden;">
<div class="t" style="top:4px;right:13.5px;font-size:25px;color:#262626;transform:scaleX(0.93);transform-origin:right 0;">2.560</div></div>
<div class="r" style="left:3003.9px;top:907.0px;width:246.5px;height:36.0px;background:#dfdfdf;"></div>
<div class="r" style="left:3003.9px;top:907.0px;width:246.5px;height:36.0px;overflow:hidden;">
<div class="t" style="top:4px;right:13.6px;font-size:25px;color:#262626;transform:scaleX(0.905);transform-origin:right 0;">28.01.2026 16:47:03</div></div>
<div class="r" style="left:3252.0px;top:907.0px;width:289.5px;height:36.0px;background:#f9f9f9;"></div>
<div class="r" style="left:3252.0px;top:907.0px;width:289.5px;height:36.0px;overflow:hidden;">
<div class="t" style="top:4px;right:13.5px;font-size:25px;color:#262626;">No New Value Available</div></div>
<div class="r" style="left:3543.5px;top:907.0px;width:351.3px;height:36.0px;background:#dfdfdf;"></div>
<div class="t" style="top:911.0px;font-size:25px;color:#262626;left:3555.0px;">-</div>
<div class="r" style="left:45.0px;top:944.8px;width:110.3px;height:36.0px;background:#dfdfdf;"></div>
<div class="t" style="top:948.8px;font-size:25px;color:#262626;transform:scaleX(0.93);transform-origin:center 0;left:-384.0px;width:1000px;text-align:center;">74</div>
<div class="r" style="left:157.2px;top:944.8px;width:308.6px;height:36.0px;background:#f9f9f9;"></div>
<div class="t" style="top:948.8px;font-size:25px;color:#262626;transform:scaleX(1.03);transform-origin:left 0;left:169.8px;">COMMON</div>
<div class="r" style="left:467.8px;top:944.8px;width:411.5px;height:36.0px;background:#f9f9f9;"></div>
<div class="t" style="top:948.8px;font-size:25px;color:#262626;left:477.5px;">AO</div>
<div class="r" style="left:881.2px;top:944.8px;width:875.8px;height:36.0px;background:#f9f9f9;"></div>
<div class="t" style="top:948.8px;font-size:25px;color:#262626;transform:scaleX(0.965);transform-origin:left 0;left:892.9px;">HeaterPower</div>
<div class="r" style="left:1757.8px;top:944.8px;width:189.4px;height:36.0px;background:#dfdfdf;"></div>
<div class="t" style="top:948.8px;font-size:25px;color:#262626;left:1352.4px;width:1000px;text-align:center;">V</div>
<div class="r" style="left:1949.5px;top:944.8px;width:557.1px;height:36.0px;background:#f9f9f9;"></div>
<div class="r" style="left:1949.5px;top:944.8px;width:557.1px;height:36.0px;overflow:hidden;">
<div class="t" style="top:4px;right:14.6px;font-size:25px;color:#262626;transform:scaleX(0.93);transform-origin:right 0;">1.000</div></div>
<div class="r" style="left:2507.8px;top:944.8px;width:176.2px;height:36.0px;background:#dfdfdf;"></div>
<div class="r" style="left:2507.8px;top:944.8px;width:176.2px;height:36.0px;overflow:hidden;">
<div class="t" style="top:4px;right:14.0px;font-size:25px;color:#262626;">-</div></div>
<div class="r" style="left:2686.0px;top:944.8px;width:160.3px;height:36.0px;background:#f9f9f9;"></div>
<div class="r" style="left:2686.0px;top:944.8px;width:160.3px;height:36.0px;overflow:hidden;">
<div class="t" style="top:4px;right:12.3px;font-size:25px;color:#262626;transform:scaleX(0.93);transform-origin:right 0;">0.000</div></div>
<div class="r" style="left:2848.0px;top:944.8px;width:154.5px;height:36.0px;background:#f9f9f9;"></div>
<div class="r" style="left:2848.0px;top:944.8px;width:154.5px;height:36.0px;overflow:hidden;">
<div class="t" style="top:4px;right:13.5px;font-size:25px;color:#262626;transform:scaleX(0.93);transform-origin:right 0;">1.000</div></div>
<div class="r" style="left:3003.9px;top:944.8px;width:246.5px;height:36.0px;background:#dfdfdf;"></div>
<div class="r" style="left:3003.9px;top:944.8px;width:246.5px;height:36.0px;overflow:hidden;">
<div class="t" style="top:4px;right:13.6px;font-size:25px;color:#262626;transform:scaleX(0.905);transform-origin:right 0;">28.01.2026 16:46:57</div></div>
<div class="r" style="left:3252.0px;top:944.8px;width:289.5px;height:36.0px;background:#f9f9f9;"></div>
<div class="r" style="left:3252.0px;top:944.8px;width:289.5px;height:36.0px;overflow:hidden;">
<div class="t" style="top:4px;right:13.5px;font-size:25px;color:#262626;">No New Value Available</div></div>
<div class="r" style="left:3543.5px;top:944.8px;width:351.3px;height:36.0px;background:#dfdfdf;"></div>
<div class="t" style="top:948.8px;font-size:25px;color:#262626;left:3555.0px;">-</div>
<div class="r" style="left:45.0px;top:982.7px;width:110.3px;height:36.0px;background:#dfdfdf;"></div>
<div class="t" style="top:986.7px;font-size:25px;color:#262626;transform:scaleX(0.93);transform-origin:center 0;left:-384.0px;width:1000px;text-align:center;">84</div>
<div class="r" style="left:157.2px;top:982.7px;width:308.6px;height:36.0px;background:#f9f9f9;"></div>
<div class="t" style="top:986.7px;font-size:25px;color:#262626;transform:scaleX(1.03);transform-origin:left 0;left:169.8px;">COMMON</div>
<div class="r" style="left:467.8px;top:982.7px;width:411.5px;height:36.0px;background:#f9f9f9;"></div>
<div class="t" style="top:986.7px;font-size:25px;color:#262626;left:477.5px;">AI</div>
<div class="r" style="left:881.2px;top:982.7px;width:875.8px;height:36.0px;background:#f9f9f9;"></div>
<div class="t" style="top:986.7px;font-size:25px;color:#262626;transform:scaleX(0.86);transform-origin:left 0;left:892.9px;">PI5_050</div>
<div class="r" style="left:1757.8px;top:982.7px;width:189.4px;height:36.0px;background:#dfdfdf;"></div>
<div class="t" style="top:986.7px;font-size:25px;color:#262626;transform:scaleX(0.965);transform-origin:center 0;left:1352.4px;width:1000px;text-align:center;">Bar</div>
<div class="r" style="left:1949.5px;top:982.7px;width:557.1px;height:36.0px;background:#f9f9f9;"></div>
<div class="r" style="left:1949.5px;top:982.7px;width:557.1px;height:36.0px;overflow:hidden;">
<div class="t" style="top:4px;right:14.6px;font-size:25px;color:#262626;transform:scaleX(0.93);transform-origin:right 0;">6.000</div></div>
<div class="r" style="left:2507.8px;top:982.7px;width:176.2px;height:36.0px;background:#dfdfdf;"></div>
<div class="r" style="left:2507.8px;top:982.7px;width:176.2px;height:36.0px;overflow:hidden;">
<div class="t" style="top:4px;right:14.0px;font-size:25px;color:#262626;">-</div></div>
<div class="r" style="left:2686.0px;top:982.7px;width:160.3px;height:36.0px;background:#f9f9f9;"></div>
<div class="r" style="left:2686.0px;top:982.7px;width:160.3px;height:36.0px;overflow:hidden;">
<div class="t" style="top:4px;right:12.3px;font-size:25px;color:#262626;transform:scaleX(0.93);transform-origin:right 0;">6.000</div></div>
<div class="r" style="left:2848.0px;top:982.7px;width:154.5px;height:36.0px;background:#f9f9f9;"></div>
<div class="r" style="left:2848.0px;top:982.7px;width:154.5px;height:36.0px;overflow:hidden;">
<div class="t" style="top:4px;right:13.5px;font-size:25px;color:#262626;transform:scaleX(0.93);transform-origin:right 0;">6.000</div></div>
<div class="r" style="left:3003.9px;top:982.7px;width:246.5px;height:36.0px;background:#dfdfdf;"></div>
<div class="r" style="left:3003.9px;top:982.7px;width:246.5px;height:36.0px;overflow:hidden;">
<div class="t" style="top:4px;right:13.6px;font-size:25px;color:#262626;transform:scaleX(0.905);transform-origin:right 0;">28.01.2026 16:49:40</div></div>
<div class="r" style="left:3252.0px;top:982.7px;width:289.5px;height:36.0px;background:#f9f9f9;"></div>
<div class="r" style="left:3252.0px;top:982.7px;width:289.5px;height:36.0px;overflow:hidden;">
<div class="t" style="top:4px;right:13.5px;font-size:25px;color:#262626;">No New Value Available</div></div>
<div class="r" style="left:3543.5px;top:982.7px;width:351.3px;height:36.0px;background:#dfdfdf;"></div>
<div class="t" style="top:986.7px;font-size:25px;color:#262626;left:3555.0px;">-</div>
<div class="r" style="left:45.0px;top:1020.6px;width:110.3px;height:36.0px;background:#dfdfdf;"></div>
<div class="t" style="top:1024.6px;font-size:25px;color:#262626;transform:scaleX(0.93);transform-origin:center 0;left:-384.0px;width:1000px;text-align:center;">85</div>
<div class="r" style="left:157.2px;top:1020.6px;width:308.6px;height:36.0px;background:#f9f9f9;"></div>
<div class="t" style="top:1024.6px;font-size:25px;color:#262626;transform:scaleX(1.03);transform-origin:left 0;left:169.8px;">COMMON</div>
<div class="r" style="left:467.8px;top:1020.6px;width:411.5px;height:36.0px;background:#f9f9f9;"></div>
<div class="t" style="top:1024.6px;font-size:25px;color:#262626;left:477.5px;">AI</div>
<div class="r" style="left:881.2px;top:1020.6px;width:875.8px;height:36.0px;background:#f9f9f9;"></div>
<div class="t" style="top:1024.6px;font-size:25px;color:#262626;transform:scaleX(0.86);transform-origin:left 0;left:892.9px;">PI3_090</div>
<div class="r" style="left:1757.8px;top:1020.6px;width:189.4px;height:36.0px;background:#dfdfdf;"></div>
<div class="t" style="top:1024.6px;font-size:25px;color:#262626;transform:scaleX(0.965);transform-origin:center 0;left:1352.4px;width:1000px;text-align:center;">Bar</div>
<div class="r" style="left:1949.5px;top:1020.6px;width:557.1px;height:36.0px;background:#f9f9f9;"></div>
<div class="r" style="left:1949.5px;top:1020.6px;width:557.1px;height:36.0px;overflow:hidden;">
<div class="t" style="top:4px;right:14.6px;font-size:25px;color:#262626;transform:scaleX(0.93);transform-origin:right 0;">6.000</div></div>
<div class="r" style="left:2507.8px;top:1020.6px;width:176.2px;height:36.0px;background:#dfdfdf;"></div>
<div class="r" style="left:2507.8px;top:1020.6px;width:176.2px;height:36.0px;overflow:hidden;">
<div class="t" style="top:4px;right:14.0px;font-size:25px;color:#262626;">-</div></div>
<div class="r" style="left:2686.0px;top:1020.6px;width:160.3px;height:36.0px;background:#f9f9f9;"></div>
<div class="r" style="left:2686.0px;top:1020.6px;width:160.3px;height:36.0px;overflow:hidden;">
<div class="t" style="top:4px;right:12.3px;font-size:25px;color:#262626;transform:scaleX(0.93);transform-origin:right 0;">6.000</div></div>
<div class="r" style="left:2848.0px;top:1020.6px;width:154.5px;height:36.0px;background:#f9f9f9;"></div>
<div class="r" style="left:2848.0px;top:1020.6px;width:154.5px;height:36.0px;overflow:hidden;">
<div class="t" style="top:4px;right:13.5px;font-size:25px;color:#262626;transform:scaleX(0.93);transform-origin:right 0;">6.000</div></div>
<div class="r" style="left:3003.9px;top:1020.6px;width:246.5px;height:36.0px;background:#dfdfdf;"></div>
<div class="r" style="left:3003.9px;top:1020.6px;width:246.5px;height:36.0px;overflow:hidden;">
<div class="t" style="top:4px;right:13.6px;font-size:25px;color:#262626;transform:scaleX(0.905);transform-origin:right 0;">28.01.2026 16:49:40</div></div>
<div class="r" style="left:3252.0px;top:1020.6px;width:289.5px;height:36.0px;background:#f9f9f9;"></div>
<div class="r" style="left:3252.0px;top:1020.6px;width:289.5px;height:36.0px;overflow:hidden;">
<div class="t" style="top:4px;right:13.5px;font-size:25px;color:#262626;">No New Value Available</div></div>
<div class="r" style="left:3543.5px;top:1020.6px;width:351.3px;height:36.0px;background:#dfdfdf;"></div>
<div class="t" style="top:1024.6px;font-size:25px;color:#262626;left:3555.0px;">-</div>
<div class="r" style="left:45.0px;top:1058.5px;width:110.3px;height:36.0px;background:#dfdfdf;"></div>
<div class="t" style="top:1062.5px;font-size:25px;color:#262626;transform:scaleX(0.93);transform-origin:center 0;left:-384.0px;width:1000px;text-align:center;">86</div>
<div class="r" style="left:157.2px;top:1058.5px;width:308.6px;height:36.0px;background:#f9f9f9;"></div>
<div class="t" style="top:1062.5px;font-size:25px;color:#262626;transform:scaleX(1.03);transform-origin:left 0;left:169.8px;">COMMON</div>
<div class="r" style="left:467.8px;top:1058.5px;width:411.5px;height:36.0px;background:#f9f9f9;"></div>
<div class="t" style="top:1062.5px;font-size:25px;color:#262626;left:477.5px;">AI</div>
<div class="r" style="left:881.2px;top:1058.5px;width:875.8px;height:36.0px;background:#f9f9f9;"></div>
<div class="t" style="top:1062.5px;font-size:25px;color:#262626;transform:scaleX(0.86);transform-origin:left 0;left:892.9px;">PI3_050</div>
<div class="r" style="left:1757.8px;top:1058.5px;width:189.4px;height:36.0px;background:#dfdfdf;"></div>
<div class="t" style="top:1062.5px;font-size:25px;color:#262626;transform:scaleX(0.965);transform-origin:center 0;left:1352.4px;width:1000px;text-align:center;">Bar</div>
<div class="r" style="left:1949.5px;top:1058.5px;width:557.1px;height:36.0px;background:#f9f9f9;"></div>
<div class="r" style="left:1949.5px;top:1058.5px;width:557.1px;height:36.0px;overflow:hidden;">
<div class="t" style="top:4px;right:14.6px;font-size:25px;color:#262626;transform:scaleX(0.93);transform-origin:right 0;">6.000</div></div>
<div class="r" style="left:2507.8px;top:1058.5px;width:176.2px;height:36.0px;background:#dfdfdf;"></div>
<div class="r" style="left:2507.8px;top:1058.5px;width:176.2px;height:36.0px;overflow:hidden;">
<div class="t" style="top:4px;right:14.0px;font-size:25px;color:#262626;">-</div></div>
<div class="r" style="left:2686.0px;top:1058.5px;width:160.3px;height:36.0px;background:#f9f9f9;"></div>
<div class="r" style="left:2686.0px;top:1058.5px;width:160.3px;height:36.0px;overflow:hidden;">
<div class="t" style="top:4px;right:12.3px;font-size:25px;color:#262626;transform:scaleX(0.93);transform-origin:right 0;">6.000</div></div>
<div class="r" style="left:2848.0px;top:1058.5px;width:154.5px;height:36.0px;background:#f9f9f9;"></div>
<div class="r" style="left:2848.0px;top:1058.5px;width:154.5px;height:36.0px;overflow:hidden;">
<div class="t" style="top:4px;right:13.5px;font-size:25px;color:#262626;transform:scaleX(0.93);transform-origin:right 0;">6.000</div></div>
<div class="r" style="left:3003.9px;top:1058.5px;width:246.5px;height:36.0px;background:#dfdfdf;"></div>
<div class="r" style="left:3003.9px;top:1058.5px;width:246.5px;height:36.0px;overflow:hidden;">
<div class="t" style="top:4px;right:13.6px;font-size:25px;color:#262626;transform:scaleX(0.905);transform-origin:right 0;">28.01.2026 16:49:40</div></div>
<div class="r" style="left:3252.0px;top:1058.5px;width:289.5px;height:36.0px;background:#f9f9f9;"></div>
<div class="r" style="left:3252.0px;top:1058.5px;width:289.5px;height:36.0px;overflow:hidden;">
<div class="t" style="top:4px;right:13.5px;font-size:25px;color:#262626;">No New Value Available</div></div>
<div class="r" style="left:3543.5px;top:1058.5px;width:351.3px;height:36.0px;background:#dfdfdf;"></div>
<div class="t" style="top:1062.5px;font-size:25px;color:#262626;left:3555.0px;">-</div>
<div class="r" style="left:45.0px;top:1096.4px;width:110.3px;height:36.0px;background:#dfdfdf;"></div>
<div class="t" style="top:1100.4px;font-size:25px;color:#262626;transform:scaleX(0.93);transform-origin:center 0;left:-384.0px;width:1000px;text-align:center;">93</div>
<div class="r" style="left:157.2px;top:1096.4px;width:308.6px;height:36.0px;background:#f9f9f9;"></div>
<div class="t" style="top:1100.4px;font-size:25px;color:#262626;transform:scaleX(1.03);transform-origin:left 0;left:169.8px;">COMMON</div>
<div class="r" style="left:467.8px;top:1096.4px;width:411.5px;height:36.0px;background:#f9f9f9;"></div>
<div class="t" style="top:1100.4px;font-size:25px;color:#262626;left:477.5px;">AI</div>
<div class="r" style="left:881.2px;top:1096.4px;width:875.8px;height:36.0px;background:#f9f9f9;"></div>
<div class="t" style="top:1100.4px;font-size:25px;color:#262626;transform:scaleX(0.86);transform-origin:left 0;left:892.9px;">T3_040</div>
<div class="r" style="left:1757.8px;top:1096.4px;width:189.4px;height:36.0px;background:#dfdfdf;"></div>
<div class="t" style="top:1100.4px;font-size:25px;color:#262626;left:1352.4px;width:1000px;text-align:center;">°C</div>
<div class="r" style="left:1949.5px;top:1096.4px;width:557.1px;height:36.0px;background:#f9f9f9;"></div>
<div class="r" style="left:1949.5px;top:1096.4px;width:557.1px;height:36.0px;overflow:hidden;">
<div class="t" style="top:4px;right:14.6px;font-size:25px;color:#262626;transform:scaleX(0.93);transform-origin:right 0;">150.000</div></div>
<div class="r" style="left:2507.8px;top:1096.4px;width:176.2px;height:36.0px;background:#dfdfdf;"></div>
<div class="r" style="left:2507.8px;top:1096.4px;width:176.2px;height:36.0px;overflow:hidden;">
<div class="t" style="top:4px;right:14.0px;font-size:25px;color:#262626;">-</div></div>
<div class="r" style="left:2686.0px;top:1096.4px;width:160.3px;height:36.0px;background:#f9f9f9;"></div>
<div class="r" style="left:2686.0px;top:1096.4px;width:160.3px;height:36.0px;overflow:hidden;">
<div class="t" style="top:4px;right:12.3px;font-size:25px;color:#262626;transform:scaleX(0.93);transform-origin:right 0;">150.000</div></div>
<div class="r" style="left:2848.0px;top:1096.4px;width:154.5px;height:36.0px;background:#f9f9f9;"></div>
<div class="r" style="left:2848.0px;top:1096.4px;width:154.5px;height:36.0px;overflow:hidden;">
<div class="t" style="top:4px;right:13.5px;font-size:25px;color:#262626;transform:scaleX(0.93);transform-origin:right 0;">150.000</div></div>
<div class="r" style="left:3003.9px;top:1096.4px;width:246.5px;height:36.0px;background:#dfdfdf;"></div>
<div class="r" style="left:3003.9px;top:1096.4px;width:246.5px;height:36.0px;overflow:hidden;">
<div class="t" style="top:4px;right:13.6px;font-size:25px;color:#262626;transform:scaleX(0.905);transform-origin:right 0;">28.01.2026 16:49:40</div></div>
<div class="r" style="left:3252.0px;top:1096.4px;width:289.5px;height:36.0px;background:#f9f9f9;"></div>
<div class="r" style="left:3252.0px;top:1096.4px;width:289.5px;height:36.0px;overflow:hidden;">
<div class="t" style="top:4px;right:13.5px;font-size:25px;color:#262626;">No New Value Available</div></div>
<div class="r" style="left:3543.5px;top:1096.4px;width:351.3px;height:36.0px;background:#dfdfdf;"></div>
<div class="t" style="top:1100.4px;font-size:25px;color:#262626;left:3555.0px;">-</div>
<div class="r" style="left:45.0px;top:1134.3px;width:110.3px;height:36.0px;background:#dfdfdf;"></div>
<div class="t" style="top:1138.3px;font-size:25px;color:#262626;transform:scaleX(0.93);transform-origin:center 0;left:-384.0px;width:1000px;text-align:center;">97</div>
<div class="r" style="left:157.2px;top:1134.3px;width:308.6px;height:36.0px;background:#f9f9f9;"></div>
<div class="t" style="top:1138.3px;font-size:25px;color:#262626;transform:scaleX(1.03);transform-origin:left 0;left:169.8px;">COMMON</div>
<div class="r" style="left:467.8px;top:1134.3px;width:411.5px;height:36.0px;background:#f9f9f9;"></div>
<div class="t" style="top:1138.3px;font-size:25px;color:#262626;left:477.5px;">AI</div>
<div class="r" style="left:881.2px;top:1134.3px;width:875.8px;height:36.0px;background:#f9f9f9;"></div>
<div class="t" style="top:1138.3px;font-size:25px;color:#262626;transform:scaleX(0.86);transform-origin:left 0;left:892.9px;">QI_3_070</div>
<div class="r" style="left:1757.8px;top:1134.3px;width:189.4px;height:36.0px;background:#dfdfdf;"></div>
<div class="t" style="top:1138.3px;font-size:25px;color:#262626;transform:scaleX(0.965);transform-origin:center 0;left:1352.4px;width:1000px;text-align:center;">uS/cm</div>
<div class="r" style="left:1949.5px;top:1134.3px;width:557.1px;height:36.0px;background:#f9f9f9;"></div>
<div class="r" style="left:1949.5px;top:1134.3px;width:557.1px;height:36.0px;overflow:hidden;">
<div class="t" style="top:4px;right:14.6px;font-size:25px;color:#262626;transform:scaleX(0.93);transform-origin:right 0;">20.000</div></div>
<div class="r" style="left:2507.8px;top:1134.3px;width:176.2px;height:36.0px;background:#dfdfdf;"></div>
<div class="r" style="left:2507.8px;top:1134.3px;width:176.2px;height:36.0px;overflow:hidden;">
<div class="t" style="top:4px;right:14.0px;font-size:25px;color:#262626;">-</div></div>
<div class="r" style="left:2686.0px;top:1134.3px;width:160.3px;height:36.0px;background:#f9f9f9;"></div>
<div class="r" style="left:2686.0px;top:1134.3px;width:160.3px;height:36.0px;overflow:hidden;">
<div class="t" style="top:4px;right:12.3px;font-size:25px;color:#262626;transform:scaleX(0.93);transform-origin:right 0;">20.000</div></div>
<div class="r" style="left:2848.0px;top:1134.3px;width:154.5px;height:36.0px;background:#f9f9f9;"></div>
<div class="r" style="left:2848.0px;top:1134.3px;width:154.5px;height:36.0px;overflow:hidden;">
<div class="t" style="top:4px;right:13.5px;font-size:25px;color:#262626;transform:scaleX(0.93);transform-origin:right 0;">20.000</div></div>
<div class="r" style="left:3003.9px;top:1134.3px;width:246.5px;height:36.0px;background:#dfdfdf;"></div>
<div class="r" style="left:3003.9px;top:1134.3px;width:246.5px;height:36.0px;overflow:hidden;">
<div class="t" style="top:4px;right:13.6px;font-size:25px;color:#262626;transform:scaleX(0.905);transform-origin:right 0;">28.01.2026 16:49:40</div></div>
<div class="r" style="left:3252.0px;top:1134.3px;width:289.5px;height:36.0px;background:#f9f9f9;"></div>
<div class="r" style="left:3252.0px;top:1134.3px;width:289.5px;height:36.0px;overflow:hidden;">
<div class="t" style="top:4px;right:13.5px;font-size:25px;color:#262626;">No New Value Available</div></div>
<div class="r" style="left:3543.5px;top:1134.3px;width:351.3px;height:36.0px;background:#dfdfdf;"></div>
<div class="t" style="top:1138.3px;font-size:25px;color:#262626;left:3555.0px;">-</div>
<div class="r" style="left:45.0px;top:1172.2px;width:110.3px;height:36.0px;background:#dfdfdf;"></div>
<div class="t" style="top:1176.2px;font-size:25px;color:#262626;transform:scaleX(0.93);transform-origin:center 0;left:-384.0px;width:1000px;text-align:center;">98</div>
<div class="r" style="left:157.2px;top:1172.2px;width:308.6px;height:36.0px;background:#f9f9f9;"></div>
<div class="t" style="top:1176.2px;font-size:25px;color:#262626;transform:scaleX(1.03);transform-origin:left 0;left:169.8px;">COMMON</div>
<div class="r" style="left:467.8px;top:1172.2px;width:411.5px;height:36.0px;background:#f9f9f9;"></div>
<div class="t" style="top:1176.2px;font-size:25px;color:#262626;left:477.5px;">DI</div>
<div class="r" style="left:881.2px;top:1172.2px;width:875.8px;height:36.0px;background:#f9f9f9;"></div>
<div class="t" style="top:1176.2px;font-size:25px;color:#262626;transform:scaleX(0.86);transform-origin:left 0;left:892.9px;">LS1_032</div>
<div class="r" style="left:1757.8px;top:1172.2px;width:189.4px;height:36.0px;background:#dfdfdf;"></div>
<div class="t" style="top:1176.2px;font-size:25px;color:#262626;left:1352.4px;width:1000px;text-align:center;">-</div>
<div class="r" style="left:1949.5px;top:1172.2px;width:557.1px;height:36.0px;background:#f9f9f9;"></div>
<div class="r" style="left:1949.5px;top:1172.2px;width:557.1px;height:36.0px;overflow:hidden;">
<div class="t" style="top:4px;right:14.6px;font-size:25px;color:#262626;">F</div></div>
<div class="r" style="left:2507.8px;top:1172.2px;width:176.2px;height:36.0px;background:#dfdfdf;"></div>
<div class="r" style="left:2507.8px;top:1172.2px;width:176.2px;height:36.0px;overflow:hidden;">
<div class="t" style="top:4px;right:14.0px;font-size:25px;color:#262626;">-</div></div>
<div class="r" style="left:2686.0px;top:1172.2px;width:160.3px;height:36.0px;background:#f9f9f9;"></div>
<div class="r" style="left:2686.0px;top:1172.2px;width:160.3px;height:36.0px;overflow:hidden;">
<div class="t" style="top:4px;right:12.3px;font-size:25px;color:#262626;transform:scaleX(0.93);transform-origin:right 0;">0.000</div></div>
<div class="r" style="left:2848.0px;top:1172.2px;width:154.5px;height:36.0px;background:#f9f9f9;"></div>
<div class="r" style="left:2848.0px;top:1172.2px;width:154.5px;height:36.0px;overflow:hidden;">
<div class="t" style="top:4px;right:13.5px;font-size:25px;color:#262626;transform:scaleX(0.93);transform-origin:right 0;">1.000</div></div>
<div class="r" style="left:3003.9px;top:1172.2px;width:246.5px;height:36.0px;background:#dfdfdf;"></div>
<div class="r" style="left:3003.9px;top:1172.2px;width:246.5px;height:36.0px;overflow:hidden;">
<div class="t" style="top:4px;right:13.6px;font-size:25px;color:#262626;transform:scaleX(0.905);transform-origin:right 0;">28.01.2026 16:49:40</div></div>
<div class="r" style="left:3252.0px;top:1172.2px;width:289.5px;height:36.0px;background:#f9f9f9;"></div>
<div class="r" style="left:3252.0px;top:1172.2px;width:289.5px;height:36.0px;overflow:hidden;">
<div class="t" style="top:4px;right:13.5px;font-size:25px;color:#262626;">No New Value Available</div></div>
<div class="r" style="left:3543.5px;top:1172.2px;width:351.3px;height:36.0px;background:#dfdfdf;"></div>
<div class="t" style="top:1176.2px;font-size:25px;color:#262626;left:3555.0px;">-</div>
<div class="r" style="left:45.0px;top:1210.0px;width:110.3px;height:36.0px;background:#dfdfdf;"></div>
<div class="t" style="top:1214.0px;font-size:25px;color:#262626;transform:scaleX(0.93);transform-origin:center 0;left:-384.0px;width:1000px;text-align:center;">99</div>
<div class="r" style="left:157.2px;top:1210.0px;width:308.6px;height:36.0px;background:#f9f9f9;"></div>
<div class="t" style="top:1214.0px;font-size:25px;color:#262626;transform:scaleX(1.03);transform-origin:left 0;left:169.8px;">COMMON</div>
<div class="r" style="left:467.8px;top:1210.0px;width:411.5px;height:36.0px;background:#f9f9f9;"></div>
<div class="t" style="top:1214.0px;font-size:25px;color:#262626;left:477.5px;">DI</div>
<div class="r" style="left:881.2px;top:1210.0px;width:875.8px;height:36.0px;background:#f9f9f9;"></div>
<div class="t" style="top:1214.0px;font-size:25px;color:#262626;transform:scaleX(0.86);transform-origin:left 0;left:892.9px;">LS1_030</div>
<div class="r" style="left:1757.8px;top:1210.0px;width:189.4px;height:36.0px;background:#dfdfdf;"></div>
<div class="t" style="top:1214.0px;font-size:25px;color:#262626;left:1352.4px;width:1000px;text-align:center;">-</div>
<div class="r" style="left:1949.5px;top:1210.0px;width:557.1px;height:36.0px;background:#f9f9f9;"></div>
<div class="r" style="left:1949.5px;top:1210.0px;width:557.1px;height:36.0px;overflow:hidden;">
<div class="t" style="top:4px;right:14.6px;font-size:25px;color:#262626;">F</div></div>
<div class="r" style="left:2507.8px;top:1210.0px;width:176.2px;height:36.0px;background:#dfdfdf;"></div>
<div class="r" style="left:2507.8px;top:1210.0px;width:176.2px;height:36.0px;overflow:hidden;">
<div class="t" style="top:4px;right:14.0px;font-size:25px;color:#262626;">-</div></div>
<div class="r" style="left:2686.0px;top:1210.0px;width:160.3px;height:36.0px;background:#f9f9f9;"></div>
<div class="r" style="left:2686.0px;top:1210.0px;width:160.3px;height:36.0px;overflow:hidden;">
<div class="t" style="top:4px;right:12.3px;font-size:25px;color:#262626;transform:scaleX(0.93);transform-origin:right 0;">0.000</div></div>
<div class="r" style="left:2848.0px;top:1210.0px;width:154.5px;height:36.0px;background:#f9f9f9;"></div>
<div class="r" style="left:2848.0px;top:1210.0px;width:154.5px;height:36.0px;overflow:hidden;">
<div class="t" style="top:4px;right:13.5px;font-size:25px;color:#262626;transform:scaleX(0.93);transform-origin:right 0;">1.000</div></div>
<div class="r" style="left:3003.9px;top:1210.0px;width:246.5px;height:36.0px;background:#dfdfdf;"></div>
<div class="r" style="left:3003.9px;top:1210.0px;width:246.5px;height:36.0px;overflow:hidden;">
<div class="t" style="top:4px;right:13.6px;font-size:25px;color:#262626;transform:scaleX(0.905);transform-origin:right 0;">28.01.2026 16:49:40</div></div>
<div class="r" style="left:3252.0px;top:1210.0px;width:289.5px;height:36.0px;background:#f9f9f9;"></div>
<div class="r" style="left:3252.0px;top:1210.0px;width:289.5px;height:36.0px;overflow:hidden;">
<div class="t" style="top:4px;right:13.5px;font-size:25px;color:#262626;">No New Value Available</div></div>
<div class="r" style="left:3543.5px;top:1210.0px;width:351.3px;height:36.0px;background:#dfdfdf;"></div>
<div class="t" style="top:1214.0px;font-size:25px;color:#262626;left:3555.0px;">-</div>
<div class="r" style="left:45.0px;top:1247.9px;width:110.3px;height:36.0px;background:#dfdfdf;"></div>
<div class="t" style="top:1251.9px;font-size:25px;color:#262626;transform:scaleX(0.93);transform-origin:center 0;left:-384.0px;width:1000px;text-align:center;">100</div>
<div class="r" style="left:157.2px;top:1247.9px;width:308.6px;height:36.0px;background:#f9f9f9;"></div>
<div class="t" style="top:1251.9px;font-size:25px;color:#262626;transform:scaleX(1.03);transform-origin:left 0;left:169.8px;">COMMON</div>
<div class="r" style="left:467.8px;top:1247.9px;width:411.5px;height:36.0px;background:#f9f9f9;"></div>
<div class="t" style="top:1251.9px;font-size:25px;color:#262626;left:477.5px;">DI</div>
<div class="r" style="left:881.2px;top:1247.9px;width:875.8px;height:36.0px;background:#f9f9f9;"></div>
<div class="t" style="top:1251.9px;font-size:25px;color:#262626;transform:scaleX(0.86);transform-origin:left 0;left:892.9px;">LSZ1_031</div>
<div class="r" style="left:1757.8px;top:1247.9px;width:189.4px;height:36.0px;background:#dfdfdf;"></div>
<div class="t" style="top:1251.9px;font-size:25px;color:#262626;transform:scaleX(0.965);transform-origin:center 0;left:1352.4px;width:1000px;text-align:center;">Inv</div>
<div class="r" style="left:1949.5px;top:1247.9px;width:557.1px;height:36.0px;background:#f9f9f9;"></div>
<div class="r" style="left:1949.5px;top:1247.9px;width:557.1px;height:36.0px;overflow:hidden;">
<div class="t" style="top:4px;right:14.6px;font-size:25px;color:#262626;">F</div></div>
<div class="r" style="left:2507.8px;top:1247.9px;width:176.2px;height:36.0px;background:#dfdfdf;"></div>
<div class="r" style="left:2507.8px;top:1247.9px;width:176.2px;height:36.0px;overflow:hidden;">
<div class="t" style="top:4px;right:14.0px;font-size:25px;color:#262626;">-</div></div>
<div class="r" style="left:2686.0px;top:1247.9px;width:160.3px;height:36.0px;background:#f9f9f9;"></div>
<div class="r" style="left:2686.0px;top:1247.9px;width:160.3px;height:36.0px;overflow:hidden;">
<div class="t" style="top:4px;right:12.3px;font-size:25px;color:#262626;transform:scaleX(0.93);transform-origin:right 0;">0.000</div></div>
<div class="r" style="left:2848.0px;top:1247.9px;width:154.5px;height:36.0px;background:#f9f9f9;"></div>
<div class="r" style="left:2848.0px;top:1247.9px;width:154.5px;height:36.0px;overflow:hidden;">
<div class="t" style="top:4px;right:13.5px;font-size:25px;color:#262626;transform:scaleX(0.93);transform-origin:right 0;">1.000</div></div>
<div class="r" style="left:3003.9px;top:1247.9px;width:246.5px;height:36.0px;background:#dfdfdf;"></div>
<div class="r" style="left:3003.9px;top:1247.9px;width:246.5px;height:36.0px;overflow:hidden;">
<div class="t" style="top:4px;right:13.6px;font-size:25px;color:#262626;transform:scaleX(0.905);transform-origin:right 0;">28.01.2026 16:49:40</div></div>
<div class="r" style="left:3252.0px;top:1247.9px;width:289.5px;height:36.0px;background:#f9f9f9;"></div>
<div class="r" style="left:3252.0px;top:1247.9px;width:289.5px;height:36.0px;overflow:hidden;">
<div class="t" style="top:4px;right:13.5px;font-size:25px;color:#262626;">No New Value Available</div></div>
<div class="r" style="left:3543.5px;top:1247.9px;width:351.3px;height:36.0px;background:#dfdfdf;"></div>
<div class="t" style="top:1251.9px;font-size:25px;color:#262626;left:3555.0px;">-</div>
<div class="r" style="left:45.0px;top:1285.8px;width:110.3px;height:36.0px;background:#dfdfdf;"></div>
<div class="t" style="top:1289.8px;font-size:25px;color:#262626;transform:scaleX(0.93);transform-origin:center 0;left:-384.0px;width:1000px;text-align:center;">101</div>
<div class="r" style="left:157.2px;top:1285.8px;width:308.6px;height:36.0px;background:#f9f9f9;"></div>
<div class="t" style="top:1289.8px;font-size:25px;color:#262626;transform:scaleX(1.03);transform-origin:left 0;left:169.8px;">COMMON</div>
<div class="r" style="left:467.8px;top:1285.8px;width:411.5px;height:36.0px;background:#f9f9f9;"></div>
<div class="t" style="top:1289.8px;font-size:25px;color:#262626;left:477.5px;">DI</div>
<div class="r" style="left:881.2px;top:1285.8px;width:875.8px;height:36.0px;background:#f9f9f9;"></div>
<div class="t" style="top:1289.8px;font-size:25px;color:#262626;transform:scaleX(0.86);transform-origin:left 0;left:892.9px;">FI_3_030</div>
<div class="r" style="left:1757.8px;top:1285.8px;width:189.4px;height:36.0px;background:#dfdfdf;"></div>
<div class="t" style="top:1289.8px;font-size:25px;color:#262626;left:1352.4px;width:1000px;text-align:center;">-</div>
<div class="r" style="left:1949.5px;top:1285.8px;width:557.1px;height:36.0px;background:#f9f9f9;"></div>
<div class="r" style="left:1949.5px;top:1285.8px;width:557.1px;height:36.0px;overflow:hidden;">
<div class="t" style="top:4px;right:14.6px;font-size:25px;color:#262626;">T</div></div>
<div class="r" style="left:2507.8px;top:1285.8px;width:176.2px;height:36.0px;background:#dfdfdf;"></div>
<div class="r" style="left:2507.8px;top:1285.8px;width:176.2px;height:36.0px;overflow:hidden;">
<div class="t" style="top:4px;right:14.0px;font-size:25px;color:#262626;">-</div></div>
<div class="r" style="left:2686.0px;top:1285.8px;width:160.3px;height:36.0px;background:#f9f9f9;"></div>
<div class="r" style="left:2686.0px;top:1285.8px;width:160.3px;height:36.0px;overflow:hidden;">
<div class="t" style="top:4px;right:12.3px;font-size:25px;color:#262626;transform:scaleX(0.93);transform-origin:right 0;">0.000</div></div>
<div class="r" style="left:2848.0px;top:1285.8px;width:154.5px;height:36.0px;background:#f9f9f9;"></div>
<div class="r" style="left:2848.0px;top:1285.8px;width:154.5px;height:36.0px;overflow:hidden;">
<div class="t" style="top:4px;right:13.5px;font-size:25px;color:#262626;transform:scaleX(0.93);transform-origin:right 0;">1.000</div></div>
<div class="r" style="left:3003.9px;top:1285.8px;width:246.5px;height:36.0px;background:#dfdfdf;"></div>
<div class="r" style="left:3003.9px;top:1285.8px;width:246.5px;height:36.0px;overflow:hidden;">
<div class="t" style="top:4px;right:13.6px;font-size:25px;color:#262626;transform:scaleX(0.905);transform-origin:right 0;">28.01.2026 16:49:40</div></div>
<div class="r" style="left:3252.0px;top:1285.8px;width:289.5px;height:36.0px;background:#f9f9f9;"></div>
<div class="r" style="left:3252.0px;top:1285.8px;width:289.5px;height:36.0px;overflow:hidden;">
<div class="t" style="top:4px;right:13.5px;font-size:25px;color:#262626;">New Value Available</div></div>
<div class="r" style="left:3543.5px;top:1285.8px;width:351.3px;height:36.0px;background:#dfdfdf;"></div>
<div class="t" style="top:1289.8px;font-size:25px;color:#262626;left:3555.0px;">-</div>
<div class="r" style="left:45.0px;top:1323.7px;width:110.3px;height:36.0px;background:#dfdfdf;"></div>
<div class="t" style="top:1327.7px;font-size:25px;color:#262626;transform:scaleX(0.93);transform-origin:center 0;left:-384.0px;width:1000px;text-align:center;">102</div>
<div class="r" style="left:157.2px;top:1323.7px;width:308.6px;height:36.0px;background:#f9f9f9;"></div>
<div class="t" style="top:1327.7px;font-size:25px;color:#262626;transform:scaleX(1.03);transform-origin:left 0;left:169.8px;">COMMON</div>
<div class="r" style="left:467.8px;top:1323.7px;width:411.5px;height:36.0px;background:#f9f9f9;"></div>
<div class="t" style="top:1327.7px;font-size:25px;color:#262626;left:477.5px;">DI</div>
<div class="r" style="left:881.2px;top:1323.7px;width:875.8px;height:36.0px;background:#f9f9f9;"></div>
<div class="t" style="top:1327.7px;font-size:25px;color:#262626;transform:scaleX(0.965);transform-origin:left 0;left:892.9px;">Teststand An</div>
<div class="r" style="left:1757.8px;top:1323.7px;width:189.4px;height:36.0px;background:#dfdfdf;"></div>
<div class="t" style="top:1327.7px;font-size:25px;color:#262626;transform:scaleX(0.965);transform-origin:center 0;left:1352.4px;width:1000px;text-align:center;">Inv</div>
<div class="r" style="left:1949.5px;top:1323.7px;width:557.1px;height:36.0px;background:#f9f9f9;"></div>
<div class="r" style="left:1949.5px;top:1323.7px;width:557.1px;height:36.0px;overflow:hidden;">
<div class="t" style="top:4px;right:14.6px;font-size:25px;color:#262626;">F</div></div>
<div class="r" style="left:2507.8px;top:1323.7px;width:176.2px;height:36.0px;background:#dfdfdf;"></div>
<div class="r" style="left:2507.8px;top:1323.7px;width:176.2px;height:36.0px;overflow:hidden;">
<div class="t" style="top:4px;right:14.0px;font-size:25px;color:#262626;">-</div></div>
<div class="r" style="left:2686.0px;top:1323.7px;width:160.3px;height:36.0px;background:#f9f9f9;"></div>
<div class="r" style="left:2686.0px;top:1323.7px;width:160.3px;height:36.0px;overflow:hidden;">
<div class="t" style="top:4px;right:12.3px;font-size:25px;color:#262626;transform:scaleX(0.93);transform-origin:right 0;">0.000</div></div>
<div class="r" style="left:2848.0px;top:1323.7px;width:154.5px;height:36.0px;background:#f9f9f9;"></div>
<div class="r" style="left:2848.0px;top:1323.7px;width:154.5px;height:36.0px;overflow:hidden;">
<div class="t" style="top:4px;right:13.5px;font-size:25px;color:#262626;transform:scaleX(0.93);transform-origin:right 0;">1.000</div></div>
<div class="r" style="left:3003.9px;top:1323.7px;width:246.5px;height:36.0px;background:#dfdfdf;"></div>
<div class="r" style="left:3003.9px;top:1323.7px;width:246.5px;height:36.0px;overflow:hidden;">
<div class="t" style="top:4px;right:13.6px;font-size:25px;color:#262626;transform:scaleX(0.905);transform-origin:right 0;">28.01.2026 16:49:40</div></div>
<div class="r" style="left:3252.0px;top:1323.7px;width:289.5px;height:36.0px;background:#f9f9f9;"></div>
<div class="r" style="left:3252.0px;top:1323.7px;width:289.5px;height:36.0px;overflow:hidden;">
<div class="t" style="top:4px;right:13.5px;font-size:25px;color:#262626;">New Value Available</div></div>
<div class="r" style="left:3543.5px;top:1323.7px;width:351.3px;height:36.0px;background:#dfdfdf;"></div>
<div class="t" style="top:1327.7px;font-size:25px;color:#262626;left:3555.0px;">-</div>
<div class="r" style="left:45.0px;top:1361.6px;width:110.3px;height:36.0px;background:#dfdfdf;"></div>
<div class="t" style="top:1365.6px;font-size:25px;color:#262626;transform:scaleX(0.93);transform-origin:center 0;left:-384.0px;width:1000px;text-align:center;">103</div>
<div class="r" style="left:157.2px;top:1361.6px;width:308.6px;height:36.0px;background:#f9f9f9;"></div>
<div class="t" style="top:1365.6px;font-size:25px;color:#262626;transform:scaleX(1.03);transform-origin:left 0;left:169.8px;">COMMON</div>
<div class="r" style="left:467.8px;top:1361.6px;width:411.5px;height:36.0px;background:#f9f9f9;"></div>
<div class="t" style="top:1365.6px;font-size:25px;color:#262626;left:477.5px;">DO</div>
<div class="r" style="left:881.2px;top:1361.6px;width:875.8px;height:36.0px;background:#f9f9f9;"></div>
<div class="t" style="top:1365.6px;font-size:25px;color:#262626;transform:scaleX(0.86);transform-origin:left 0;left:892.9px;">1_010</div>
<div class="r" style="left:1757.8px;top:1361.6px;width:189.4px;height:36.0px;background:#dfdfdf;"></div>
<div class="t" style="top:1365.6px;font-size:25px;color:#262626;left:1352.4px;width:1000px;text-align:center;">-</div>
<div class="r" style="left:1949.5px;top:1361.6px;width:557.1px;height:36.0px;background:#f9f9f9;"></div>
<div class="r" style="left:1949.5px;top:1361.6px;width:557.1px;height:36.0px;overflow:hidden;">
<div class="t" style="top:4px;right:14.6px;font-size:25px;color:#262626;">F</div></div>
<div class="r" style="left:2507.8px;top:1361.6px;width:176.2px;height:36.0px;background:#dfdfdf;"></div>
<div class="r" style="left:2507.8px;top:1361.6px;width:176.2px;height:36.0px;overflow:hidden;">
<div class="t" style="top:4px;right:14.0px;font-size:25px;color:#262626;">-</div></div>
<div class="r" style="left:2686.0px;top:1361.6px;width:160.3px;height:36.0px;background:#f9f9f9;"></div>
<div class="r" style="left:2686.0px;top:1361.6px;width:160.3px;height:36.0px;overflow:hidden;">
<div class="t" style="top:4px;right:12.3px;font-size:25px;color:#262626;transform:scaleX(1.09);transform-origin:right 0;">Inf</div></div>
<div class="r" style="left:2848.0px;top:1361.6px;width:154.5px;height:36.0px;background:#f9f9f9;"></div>
<div class="r" style="left:2848.0px;top:1361.6px;width:154.5px;height:36.0px;overflow:hidden;">
<div class="t" style="top:4px;right:13.5px;font-size:25px;color:#262626;transform:scaleX(1.07);transform-origin:right 0;">-Inf</div></div>
<div class="r" style="left:3003.9px;top:1361.6px;width:246.5px;height:36.0px;background:#dfdfdf;"></div>
<div class="r" style="left:3003.9px;top:1361.6px;width:246.5px;height:36.0px;overflow:hidden;">
<div class="t" style="top:4px;right:13.6px;font-size:25px;color:#262626;transform:scaleX(0.905);transform-origin:right 0;">28.01.2026 16:39:11</div></div>
<div class="r" style="left:3252.0px;top:1361.6px;width:289.5px;height:36.0px;background:#f9f9f9;"></div>
<div class="r" style="left:3252.0px;top:1361.6px;width:289.5px;height:36.0px;overflow:hidden;">
<div class="t" style="top:4px;right:13.5px;font-size:25px;color:#262626;">No New Value Available</div></div>
<div class="r" style="left:3543.5px;top:1361.6px;width:351.3px;height:36.0px;background:#dfdfdf;"></div>
<div class="t" style="top:1365.6px;font-size:25px;color:#262626;left:3555.0px;">-</div>
<div class="r" style="left:45.0px;top:1399.5px;width:110.3px;height:36.0px;background:#dfdfdf;"></div>
<div class="t" style="top:1403.5px;font-size:25px;color:#262626;transform:scaleX(0.93);transform-origin:center 0;left:-384.0px;width:1000px;text-align:center;">104</div>
<div class="r" style="left:157.2px;top:1399.5px;width:308.6px;height:36.0px;background:#f9f9f9;"></div>
<div class="t" style="top:1403.5px;font-size:25px;color:#262626;transform:scaleX(1.03);transform-origin:left 0;left:169.8px;">COMMON</div>
<div class="r" style="left:467.8px;top:1399.5px;width:411.5px;height:36.0px;background:#f9f9f9;"></div>
<div class="t" style="top:1403.5px;font-size:25px;color:#262626;left:477.5px;">DO</div>
<div class="r" style="left:881.2px;top:1399.5px;width:875.8px;height:36.0px;background:#f9f9f9;"></div>
<div class="t" style="top:1403.5px;font-size:25px;color:#262626;transform:scaleX(0.965);transform-origin:left 0;left:892.9px;">Watchdog</div>
<div class="r" style="left:1757.8px;top:1399.5px;width:189.4px;height:36.0px;background:#dfdfdf;"></div>
<div class="t" style="top:1403.5px;font-size:25px;color:#262626;left:1352.4px;width:1000px;text-align:center;">-</div>
<div class="r" style="left:1949.5px;top:1399.5px;width:557.1px;height:36.0px;background:#f9f9f9;"></div>
<div class="r" style="left:1949.5px;top:1399.5px;width:557.1px;height:36.0px;overflow:hidden;">
<div class="t" style="top:4px;right:14.6px;font-size:25px;color:#262626;">F</div></div>
<div class="r" style="left:2507.8px;top:1399.5px;width:176.2px;height:36.0px;background:#dfdfdf;"></div>
<div class="r" style="left:2507.8px;top:1399.5px;width:176.2px;height:36.0px;overflow:hidden;">
<div class="t" style="top:4px;right:14.0px;font-size:25px;color:#262626;">-</div></div>
<div class="r" style="left:2686.0px;top:1399.5px;width:160.3px;height:36.0px;background:#f9f9f9;"></div>
<div class="r" style="left:2686.0px;top:1399.5px;width:160.3px;height:36.0px;overflow:hidden;">
<div class="t" style="top:4px;right:12.3px;font-size:25px;color:#262626;transform:scaleX(0.93);transform-origin:right 0;">0.000</div></div>
<div class="r" style="left:2848.0px;top:1399.5px;width:154.5px;height:36.0px;background:#f9f9f9;"></div>
<div class="r" style="left:2848.0px;top:1399.5px;width:154.5px;height:36.0px;overflow:hidden;">
<div class="t" style="top:4px;right:13.5px;font-size:25px;color:#262626;transform:scaleX(0.93);transform-origin:right 0;">1.000</div></div>
<div class="r" style="left:3003.9px;top:1399.5px;width:246.5px;height:36.0px;background:#dfdfdf;"></div>
<div class="r" style="left:3003.9px;top:1399.5px;width:246.5px;height:36.0px;overflow:hidden;">
<div class="t" style="top:4px;right:13.6px;font-size:25px;color:#262626;transform:scaleX(0.905);transform-origin:right 0;">28.01.2026 16:49:41</div></div>
<div class="r" style="left:3252.0px;top:1399.5px;width:289.5px;height:36.0px;background:#f9f9f9;"></div>
<div class="r" style="left:3252.0px;top:1399.5px;width:289.5px;height:36.0px;overflow:hidden;">
<div class="t" style="top:4px;right:13.5px;font-size:25px;color:#262626;">No New Value Available</div></div>
<div class="r" style="left:3543.5px;top:1399.5px;width:351.3px;height:36.0px;background:#dfdfdf;"></div>
<div class="t" style="top:1403.5px;font-size:25px;color:#262626;left:3555.0px;">-</div>
<div class="r" style="left:45.0px;top:1437.3px;width:110.3px;height:36.0px;background:#0078d7;"></div>
<div class="t" style="top:1441.3px;font-size:25px;color:#fff;transform:scaleX(0.93);transform-origin:center 0;left:-384.0px;width:1000px;text-align:center;">109</div>
<div class="r" style="left:157.2px;top:1437.3px;width:308.6px;height:36.0px;background:#0078d7;"></div>
<div class="t" style="top:1441.3px;font-size:25px;color:#fff;transform:scaleX(1.03);transform-origin:left 0;left:169.8px;">COMMON</div>
<div class="r" style="left:467.8px;top:1437.3px;width:411.5px;height:36.0px;background:#0078d7;"></div>
<div class="t" style="top:1441.3px;font-size:25px;color:#fff;left:477.5px;">TC</div>
<div class="r" style="left:881.2px;top:1437.3px;width:875.8px;height:36.0px;background:#0078d7;"></div>
<div class="t" style="top:1441.3px;font-size:25px;color:#fff;transform:scaleX(0.86);transform-origin:left 0;left:892.9px;">4_000</div>
<div class="r" style="left:1757.8px;top:1437.3px;width:189.4px;height:36.0px;background:#0078d7;"></div>
<div class="t" style="top:1441.3px;font-size:25px;color:#fff;left:1352.4px;width:1000px;text-align:center;">°C</div>
<div class="r" style="left:1949.5px;top:1437.3px;width:557.1px;height:36.0px;background:#0078d7;"></div>
<div class="r" style="left:1949.5px;top:1437.3px;width:557.1px;height:36.0px;overflow:hidden;">
<div class="t" style="top:4px;right:14.6px;font-size:25px;color:#fff;transform:scaleX(0.93);transform-origin:right 0;">-21.401</div></div>
<div class="r" style="left:2507.8px;top:1437.3px;width:176.2px;height:36.0px;background:#0078d7;"></div>
<div class="r" style="left:2507.8px;top:1437.3px;width:176.2px;height:36.0px;overflow:hidden;">
<div class="t" style="top:4px;right:14.0px;font-size:25px;color:#fff;">-</div></div>
<div class="r" style="left:2686.0px;top:1437.3px;width:160.3px;height:36.0px;background:#0078d7;"></div>
<div class="r" style="left:2686.0px;top:1437.3px;width:160.3px;height:36.0px;overflow:hidden;">
<div class="t" style="top:4px;right:12.3px;font-size:25px;color:#fff;transform:scaleX(0.93);transform-origin:right 0;">-38.835</div></div>
<div class="r" style="left:2848.0px;top:1437.3px;width:154.5px;height:36.0px;background:#0078d7;"></div>
<div class="r" style="left:2848.0px;top:1437.3px;width:154.5px;height:36.0px;overflow:hidden;">
<div class="t" style="top:4px;right:13.5px;font-size:25px;color:#fff;transform:scaleX(0.93);transform-origin:right 0;">83.702</div></div>
<div class="r" style="left:3003.9px;top:1437.3px;width:246.5px;height:36.0px;background:#0078d7;"></div>
<div class="r" style="left:3003.9px;top:1437.3px;width:246.5px;height:36.0px;overflow:hidden;">
<div class="t" style="top:4px;right:13.6px;font-size:25px;color:#fff;transform:scaleX(0.905);transform-origin:right 0;">28.01.2026 16:49:41</div></div>
<div class="r" style="left:3252.0px;top:1437.3px;width:289.5px;height:36.0px;background:#0078d7;"></div>
<div class="r" style="left:3252.0px;top:1437.3px;width:289.5px;height:36.0px;overflow:hidden;">
<div class="t" style="top:4px;right:13.5px;font-size:25px;color:#fff;">New Value Available</div></div>
<div class="r" style="left:3543.5px;top:1437.3px;width:351.3px;height:36.0px;background:#0078d7;"></div>
<div class="t" style="top:1441.3px;font-size:25px;color:#fff;left:3555.0px;">-</div>
<div class="r" style="left:52.5px;top:1442.3px;width:27px;height:27px;border-radius:6px;background:#0060b8;"><svg width="27" height="27" style="position:absolute;left:0;top:0"><path d="M6.6 14.5 L11.8 18.6 L21 9" fill="none" stroke="#d8ecff" stroke-width="2" stroke-linecap="round" stroke-linejoin="round"/></svg></div>
<div class="r" style="left:45.0px;top:1436.3px;width:3849.8px;height:1.0px;background:#9fd0ff;"></div>
<div class="r" style="left:45.0px;top:1473.3px;width:3849.8px;height:1.0px;background:#9fd0ff;"></div>
<div class="r" style="left:45.0px;top:1475.2px;width:110.3px;height:36.0px;background:#dfdfdf;"></div>
<div class="t" style="top:1479.2px;font-size:25px;color:#262626;transform:scaleX(0.93);transform-origin:center 0;left:-384.0px;width:1000px;text-align:center;">110</div>
<div class="r" style="left:157.2px;top:1475.2px;width:308.6px;height:36.0px;background:#f9f9f9;"></div>
<div class="t" style="top:1479.2px;font-size:25px;color:#262626;transform:scaleX(1.03);transform-origin:left 0;left:169.8px;">COMMON</div>
<div class="r" style="left:467.8px;top:1475.2px;width:411.5px;height:36.0px;background:#f9f9f9;"></div>
<div class="t" style="top:1479.2px;font-size:25px;color:#262626;left:477.5px;">TC</div>
<div class="r" style="left:881.2px;top:1475.2px;width:875.8px;height:36.0px;background:#f9f9f9;"></div>
<div class="t" style="top:1479.2px;font-size:25px;color:#262626;transform:scaleX(0.86);transform-origin:left 0;left:892.9px;">4_060</div>
<div class="r" style="left:1757.8px;top:1475.2px;width:189.4px;height:36.0px;background:#dfdfdf;"></div>
<div class="t" style="top:1479.2px;font-size:25px;color:#262626;left:1352.4px;width:1000px;text-align:center;">°C</div>
<div class="r" style="left:1949.5px;top:1475.2px;width:557.1px;height:36.0px;background:#f9f9f9;"></div>
<div class="r" style="left:1949.5px;top:1475.2px;width:557.1px;height:36.0px;overflow:hidden;">
<div class="t" style="top:4px;right:14.6px;font-size:25px;color:#262626;transform:scaleX(0.93);transform-origin:right 0;">-49.383</div></div>
<div class="r" style="left:2507.8px;top:1475.2px;width:176.2px;height:36.0px;background:#dfdfdf;"></div>
<div class="r" style="left:2507.8px;top:1475.2px;width:176.2px;height:36.0px;overflow:hidden;">
<div class="t" style="top:4px;right:14.0px;font-size:25px;color:#262626;">-</div></div>
<div class="r" style="left:2686.0px;top:1475.2px;width:160.3px;height:36.0px;background:#f9f9f9;"></div>
<div class="r" style="left:2686.0px;top:1475.2px;width:160.3px;height:36.0px;overflow:hidden;">
<div class="t" style="top:4px;right:12.3px;font-size:25px;color:#262626;transform:scaleX(0.93);transform-origin:right 0;">-71.115</div></div>
<div class="r" style="left:2848.0px;top:1475.2px;width:154.5px;height:36.0px;background:#f9f9f9;"></div>
<div class="r" style="left:2848.0px;top:1475.2px;width:154.5px;height:36.0px;overflow:hidden;">
<div class="t" style="top:4px;right:13.5px;font-size:25px;color:#262626;transform:scaleX(0.93);transform-origin:right 0;">110.150</div></div>
<div class="r" style="left:3003.9px;top:1475.2px;width:246.5px;height:36.0px;background:#dfdfdf;"></div>
<div class="r" style="left:3003.9px;top:1475.2px;width:246.5px;height:36.0px;overflow:hidden;">
<div class="t" style="top:4px;right:13.6px;font-size:25px;color:#262626;transform:scaleX(0.905);transform-origin:right 0;">28.01.2026 16:49:41</div></div>
<div class="r" style="left:3252.0px;top:1475.2px;width:289.5px;height:36.0px;background:#f9f9f9;"></div>
<div class="r" style="left:3252.0px;top:1475.2px;width:289.5px;height:36.0px;overflow:hidden;">
<div class="t" style="top:4px;right:13.5px;font-size:25px;color:#262626;">New Value Available</div></div>
<div class="r" style="left:3543.5px;top:1475.2px;width:351.3px;height:36.0px;background:#dfdfdf;"></div>
<div class="t" style="top:1479.2px;font-size:25px;color:#262626;left:3555.0px;">-</div>
<div class="r" style="left:52.5px;top:1480.2px;width:27px;height:27px;border-radius:6px;background:#0063c4;"><svg width="27" height="27" style="position:absolute;left:0;top:0"><path d="M6.6 14.5 L11.8 18.6 L21 9" fill="none" stroke="#d8ecff" stroke-width="2" stroke-linecap="round" stroke-linejoin="round"/></svg></div>
<div class="r" style="left:45.0px;top:1513.1px;width:110.3px;height:24.4px;background:#dfdfdf;"></div>
<div class="r" style="left:157.2px;top:1513.1px;width:308.6px;height:24.4px;background:#f9f9f9;"></div>
<div class="r" style="left:467.8px;top:1513.1px;width:411.5px;height:24.4px;background:#f9f9f9;"></div>
<div class="r" style="left:881.2px;top:1513.1px;width:875.8px;height:24.4px;background:#f9f9f9;"></div>
<div class="r" style="left:1757.8px;top:1513.1px;width:189.4px;height:24.4px;background:#dfdfdf;"></div>
<div class="r" style="left:1949.5px;top:1513.1px;width:557.1px;height:24.4px;background:#f9f9f9;"></div>
<div class="r" style="left:2507.8px;top:1513.1px;width:176.2px;height:24.4px;background:#dfdfdf;"></div>
<div class="r" style="left:2686.0px;top:1513.1px;width:160.3px;height:24.4px;background:#f9f9f9;"></div>
<div class="r" style="left:2848.0px;top:1513.1px;width:154.5px;height:24.4px;background:#f9f9f9;"></div>
<div class="r" style="left:3003.9px;top:1513.1px;width:246.5px;height:24.4px;background:#dfdfdf;"></div>
<div class="r" style="left:3252.0px;top:1513.1px;width:289.5px;height:24.4px;background:#f9f9f9;"></div>
<div class="r" style="left:3543.5px;top:1513.1px;width:351.3px;height:24.4px;background:#dfdfdf;"></div>
<div class="r" style="left:3911.5px;top:732.5px;width:4.0px;height:768.0px;background:#8a8a8a;"></div>
<div class="r" style="left:172.8px;top:1595.8px;width:2953.7999999999997px;height:400px;border:2px solid #a9a9b1;background:#f6f7fa;"></div>
<svg class="r" style="left:0;top:0" width="4000" height="1907" viewBox="0 0 4000 1907"><g stroke="#c8cbef" stroke-width="2.2"><line x1="174.8" y1="1844.0" x2="3126.6" y2="1844.0"/><line x1="174.8" y1="1794.7" x2="3126.6" y2="1794.7"/><line x1="174.8" y1="1745.4" x2="3126.6" y2="1745.4"/><line x1="174.8" y1="1696.1" x2="3126.6" y2="1696.1"/><line x1="174.8" y1="1646.8" x2="3126.6" y2="1646.8"/><line x1="174.8" y1="1893.3" x2="3126.6" y2="1893.3"/><line x1="297.5" y1="1597.8" x2="297.5" y2="1907"/><line x1="420.0" y1="1597.8" x2="420.0" y2="1907"/><line x1="542.5" y1="1597.8" x2="542.5" y2="1907"/><line x1="665.0" y1="1597.8" x2="665.0" y2="1907"/><line x1="787.5" y1="1597.8" x2="787.5" y2="1907"/><line x1="910.0" y1="1597.8" x2="910.0" y2="1907"/><line x1="1032.4" y1="1597.8" x2="1032.4" y2="1907"/><line x1="1154.9" y1="1597.8" x2="1154.9" y2="1907"/><line x1="1277.4" y1="1597.8" x2="1277.4" y2="1907"/><line x1="1399.9" y1="1597.8" x2="1399.9" y2="1907"/><line x1="1522.4" y1="1597.8" x2="1522.4" y2="1907"/><line x1="1644.9" y1="1597.8" x2="1644.9" y2="1907"/><line x1="1767.4" y1="1597.8" x2="1767.4" y2="1907"/><line x1="1889.9" y1="1597.8" x2="1889.9" y2="1907"/><line x1="2012.4" y1="1597.8" x2="2012.4" y2="1907"/><line x1="2134.8" y1="1597.8" x2="2134.8" y2="1907"/><line x1="2257.3" y1="1597.8" x2="2257.3" y2="1907"/><line x1="2379.8" y1="1597.8" x2="2379.8" y2="1907"/><line x1="2502.3" y1="1597.8" x2="2502.3" y2="1907"/><line x1="2624.8" y1="1597.8" x2="2624.8" y2="1907"/><line x1="2747.3" y1="1597.8" x2="2747.3" y2="1907"/><line x1="2869.8" y1="1597.8" x2="2869.8" y2="1907"/><line x1="2992.3" y1="1597.8" x2="2992.3" y2="1907"/><line x1="3114.8" y1="1597.8" x2="3114.8" y2="1907"/></g><defs><clipPath id="pc"><rect x="174.8" y="1597.8" width="2951.7999999999997" height="400"/></clipPath></defs><g clip-path="url(#pc)" fill="none" stroke-linejoin="round"><polyline points="371.0,1714.3 375.1,1728.8 379.2,1746.6 383.2,1769.8 387.3,1790.9 391.4,1812.9 395.5,1833.6 399.6,1853.9 403.6,1879.8 407.7,1904.2 411.8,1920.9 415.9,1941.3 420.0,1958.0 424.0,1979.8 428.1,1995.2 432.2,2007.2 436.3,2021.9 440.4,2028.5 444.4,2034.9 448.5,2046.5 452.6,2053.7 456.7,2053.6 460.8,2049.0 464.8,2047.8 468.9,2044.9 473.0,2037.4 477.1,2030.8 481.2,2019.5 485.2,2004.7 489.3,1988.2 493.4,1972.6 497.5,1955.2 501.6,1936.3 505.6,1914.5 509.7,1893.7 513.8,1874.2 517.9,1847.5 522.0,1824.6 526.0,1801.6 530.1,1782.9 534.2,1757.7 538.3,1736.1 542.4,1721.8 546.4,1705.3 550.5,1687.1 554.6,1671.4 558.7,1656.5 562.8,1648.2 566.8,1638.1 570.9,1632.0 575.0,1630.8 579.1,1628.6 583.2,1626.7 587.2,1628.4 591.3,1635.3 595.4,1643.1 599.5,1656.9 603.6,1669.5 607.6,1679.4 611.7,1695.4 615.8,1714.4 619.9,1731.1 624.0,1748.5 628.0,1767.9 632.1,1790.7 636.2,1812.9 640.3,1834.7 644.4,1854.6 648.4,1877.2 652.5,1900.0 656.6,1920.9 660.7,1944.3 664.8,1965.1 668.8,1979.0 672.9,1990.8 677.0,2005.5 681.1,2019.7 685.2,2032.9 689.2,2040.5 693.3,2042.8 697.4,2046.0 701.5,2049.0 705.6,2046.8 709.6,2047.6 713.7,2042.6 717.8,2032.1 721.9,2023.5 726.0,2013.4 730.0,2002.2 734.1,1986.3 738.2,1966.1 742.3,1952.9 746.4,1930.7 750.4,1908.4 754.5,1885.6 758.6,1864.0 762.7,1841.5 766.8,1821.3 770.8,1800.2 774.9,1780.2 779.0,1763.0 783.1,1739.2 787.2,1720.2 791.2,1705.4 795.3,1688.7 799.4,1674.1 803.5,1662.3 807.6,1652.3 811.6,1642.7 815.7,1635.1 819.8,1630.4 823.9,1629.3 828.0,1633.5 832.0,1637.0 836.1,1642.9 840.2,1647.7 844.3,1653.6 848.4,1663.4 852.4,1675.8 856.5,1690.3 860.6,1710.7 864.7,1726.8 868.8,1746.2 872.8,1770.9 876.9,1795.2 881.0,1818.8 885.1,1836.4 889.2,1859.6 893.2,1883.3 897.3,1902.0 901.4,1923.2 905.5,1945.4 909.6,1965.0 913.6,1980.2 917.7,1997.6 921.8,2011.9 925.9,2021.2 930.0,2031.7 934.0,2041.2 938.1,2046.9 942.2,2054.0 946.3,2054.9 950.4,2053.6 954.4,2052.0 958.5,2048.2 962.6,2035.8 966.7,2026.2 970.8,2016.8 974.8,2001.8 978.9,1984.0 983.0,1971.6 987.1,1956.1 991.2,1937.3 995.2,1913.1 999.3,1893.7 1003.4,1869.1 1007.5,1845.5 1011.6,1823.4 1015.6,1804.0 1019.7,1778.4 1023.8,1756.4 1027.9,1737.8 1032.0,1721.9 1036.0,1703.0 1040.1,1688.1 1044.2,1673.0 1048.3,1661.9 1052.4,1649.9 1056.4,1644.8 1060.5,1638.8 1064.6,1629.9 1068.7,1626.0 1072.8,1629.4 1076.8,1629.9 1080.9,1637.7 1085.0,1642.0 1089.1,1651.0 1093.2,1664.7 1097.2,1680.7 1101.3,1699.2 1105.4,1711.5 1109.5,1733.3 1113.6,1749.0 1117.6,1766.2 1121.7,1788.3 1125.8,1813.5 1129.9,1832.5 1134.0,1852.0 1138.0,1874.3 1142.1,1897.5 1146.2,1920.3 1150.3,1941.7 1154.4,1962.4 1158.4,1977.6 1162.5,1994.1 1166.6,2010.4 1170.7,2024.8 1174.8,2032.4 1178.8,2041.8 1182.9,2047.1 1187.0,2051.9 1191.1,2050.0 1195.2,2047.1 1199.2,2049.3 1203.3,2045.9 1207.4,2038.6 1211.5,2024.3 1215.6,2011.4 1219.6,2000.5 1223.7,1987.7 1227.8,1968.9 1231.9,1948.4 1236.0,1926.8 1240.0,1909.5 1244.1,1886.2 1248.2,1864.6 1252.3,1844.2 1256.4,1819.4 1260.4,1801.4 1264.5,1778.6 1268.6,1761.7 1272.7,1743.6 1276.8,1720.3 1280.8,1705.2 1284.9,1686.7 1289.0,1672.0 1293.1,1657.4 1297.2,1649.2 1301.2,1642.3 1305.3,1637.3 1309.4,1629.8 1313.5,1627.9 1317.6,1625.8 1321.6,1627.5 1325.7,1637.6 1329.8,1644.8 1333.9,1657.5 1338.0,1671.4 1342.0,1686.1 1346.1,1696.1 1350.2,1710.4 1354.3,1726.8 1358.4,1748.7 1362.4,1768.6 1366.5,1788.2 1370.6,1812.0 1374.7,1833.8 1378.8,1858.3 1382.8,1882.8 1386.9,1904.4 1391.0,1920.7 1395.1,1940.3 1399.2,1956.3 1403.2,1975.6 1407.3,1994.0 1411.4,2006.0 1415.5,2016.9 1419.6,2032.4 1423.6,2039.0 1427.7,2048.5 1431.8,2054.3 1435.9,2051.3 1440.0,2054.2 1444.0,2052.0 1448.1,2041.7 1452.2,2035.4 1456.3,2028.8 1460.4,2018.6 1464.4,2005.5 1468.5,1986.7 1472.6,1972.5 1476.7,1949.9 1480.8,1931.8 1484.8,1907.8 1488.9,1884.9 1493.0,1866.7 1497.1,1847.1 1501.2,1824.9 1505.2,1805.6 1509.3,1781.7 1513.4,1763.9 1517.5,1746.0 1521.6,1721.2 1525.6,1705.1 1529.7,1687.8 1533.8,1673.7 1537.9,1662.4 1542.0,1654.4 1546.0,1641.2 1550.1,1631.6 1554.2,1625.6 1558.3,1629.0 1562.4,1631.9 1566.4,1633.2 1570.5,1634.8 1574.6,1643.2 1578.7,1652.2 1582.8,1663.7 1586.8,1680.1 1590.9,1695.0 1595.0,1713.3 1599.1,1732.9 1603.2,1754.3 1607.2,1774.5 1611.3,1790.3 1615.4,1812.8 1619.5,1833.7 1623.6,1855.2 1627.6,1874.6 1631.7,1898.6 1635.8,1921.6 1639.9,1942.7 1644.0,1962.3 1648.0,1976.3 1652.1,1989.9 1656.2,2007.2 1660.3,2021.2 1664.4,2031.1 1668.4,2038.9 1672.5,2044.7 1676.6,2051.0 1680.7,2055.8 1684.8,2055.4 1688.8,2053.9 1692.9,2046.0 1697.0,2040.6 1701.1,2032.2 1705.2,2017.2 1709.2,2004.2 1713.3,1985.6 1717.4,1968.9 1721.5,1948.1 1725.6,1932.3 1729.6,1911.6 1733.7,1888.0 1737.8,1870.1 1741.9,1844.0 1746.0,1825.2 1750.0,1800.8 1754.1,1776.2 1758.2,1754.8 1762.3,1738.2 1766.4,1722.9 1770.4,1704.6 1774.5,1685.0 1778.6,1673.2 1782.7,1657.8 1786.8,1651.0 1790.8,1639.2 1794.9,1637.3 1799.0,1633.9 1803.1,1628.2 1807.2,1627.1 1811.2,1628.2 1815.3,1632.8 1819.4,1640.5 1823.5,1650.7 1827.6,1666.4 1831.6,1680.4 1835.7,1698.0 1839.8,1712.2 1843.9,1729.1 1848.0,1750.8 1852.0,1774.0 1856.1,1790.2 1860.2,1810.1 1864.3,1832.9 1868.4,1855.6 1872.4,1875.5 1876.5,1898.7 1880.6,1921.0 1884.7,1942.3 1888.8,1962.5 1892.8,1982.6 1896.9,1995.5 1901.0,2009.7 1905.1,2021.0 1909.2,2034.6 1913.2,2042.7 1917.3,2050.3 1921.4,2055.3 1925.5,2056.6 1929.6,2051.5 1933.6,2049.1 1937.7,2044.3 1941.8,2035.5 1945.9,2027.9 1950.0,2019.2 1954.0,2003.6 1958.1,1987.3 1962.2,1968.8 1966.3,1951.1 1970.4,1930.2 1974.4,1908.5 1978.5,1890.2 1982.6,1868.3 1986.7,1846.3 1990.8,1826.2 1994.8,1804.0 1998.9,1781.3 2003.0,1757.2 2007.1,1735.2 2011.2,1719.8 2015.2,1701.7 2019.3,1689.7 2023.4,1677.6 2027.5,1663.2 2031.6,1648.8 2035.6,1643.4 2039.7,1634.5 2043.8,1628.0 2047.9,1629.0 2052.0,1628.4 2056.0,1629.4 2060.1,1637.0 2064.2,1643.4 2068.3,1652.1 2072.4,1664.2 2076.4,1676.0 2080.5,1690.0 2084.6,1705.5 2088.7,1725.9 2092.8,1749.5 2096.8,1771.9 2100.9,1794.5 2105.0,1814.5 2109.1,1834.1 2113.2,1859.9 2117.2,1879.4 2121.3,1899.2 2125.4,1921.7 2129.5,1941.4 2133.6,1962.7 2137.6,1977.5 2141.7,1997.0 2145.8,2006.4 2149.9,2017.3 2154.0,2028.2 2158.0,2039.5 2162.1,2042.7 2166.2,2044.5 2170.3,2051.0 2174.4,2048.6 2178.4,2044.1 2182.5,2039.3 2186.6,2031.8 2190.7,2024.1 2194.8,2010.2 2198.8,1994.9 2202.9,1982.9 2207.0,1965.0 2211.1,1948.8 2215.2,1932.6 2219.2,1912.9 2223.3,1893.7 2227.4,1867.3 2231.5,1842.1 2235.6,1824.4 2239.6,1801.5 2243.7,1780.9 2247.8,1762.7 2251.9,1743.1 2256.0,1724.8 2260.0,1703.8 2264.1,1691.3 2268.2,1677.7 2272.3,1663.8 2276.4,1655.5 2280.4,1643.9 2284.5,1636.0 2288.6,1629.2 2292.7,1630.5 2296.8,1632.3 2300.8,1634.1 2304.9,1640.6 2309.0,1646.4 2313.1,1657.5 2317.2,1666.8 2321.2,1678.1 2325.3,1691.9 2329.4,1706.6 2333.5,1726.8 2337.6,1747.8 2341.6,1766.4 2345.7,1787.2 2349.8,1810.1 2353.9,1834.3 2358.0,1858.3 2362.0,1882.7 2366.1,1900.5 2370.2,1924.2 2374.3,1941.3 2378.4,1959.8 2382.4,1974.1 2386.5,1989.6 2390.6,2002.1 2394.7,2019.7 2398.8,2030.6 2402.8,2038.7 2406.9,2046.7 2411.0,2050.3 2415.1,2052.8 2419.2,2051.5 2423.2,2052.0 2427.3,2045.6 2431.4,2037.5 2435.5,2028.5 2439.6,2016.6 2443.6,2000.1 2447.7,1983.8 2451.8,1967.8 2455.9,1948.9 2460.0,1931.0 2464.0,1912.8 2468.1,1894.5 2472.2,1872.4 2476.3,1847.8 2480.4,1822.1 2484.4,1798.4 2488.5,1778.2 2492.6,1754.6 2496.7,1737.0 2500.8,1716.7 2504.8,1701.5 2508.9,1684.4 2513.0,1667.6 2517.1,1658.7 2521.2,1651.3 2525.2,1641.5 2529.3,1635.0 2533.4,1632.2 2537.5,1633.8 2541.6,1633.6 2545.6,1635.7 2549.7,1640.6 2553.8,1644.4 2557.9,1653.9 2562.0,1664.3 2566.0,1675.8 2570.1,1691.0 2574.2,1709.7 2578.3,1727.2 2582.4,1746.9 2586.4,1767.5 2590.5,1788.9 2594.6,1812.4 2598.7,1833.9 2602.8,1855.6 2606.8,1875.0 2610.9,1896.1 2615.0,1916.2 2619.1,1936.3 2623.2,1954.9 2627.2,1973.8 2631.3,1992.5 2635.4,2009.1 2639.5,2019.7 2643.6,2027.8 2647.6,2037.2 2651.7,2047.0 2655.8,2048.0 2659.9,2050.5 2664.0,2050.6 2668.0,2051.1 2672.1,2044.6 2676.2,2034.6 2680.3,2025.9 2684.4,2015.4 2688.4,2000.3 2692.5,1988.8 2696.6,1970.6 2700.7,1948.3 2704.8,1928.3 2708.8,1909.7 2712.9,1887.5 2717.0,1865.8 2721.1,1846.7 2725.2,1826.3 2729.2,1800.5 2733.3,1781.2 2737.4,1763.2 2741.5,1739.3 2745.6,1720.4 2749.6,1704.0 2753.7,1687.6 2757.8,1671.4 2761.9,1662.0 2766.0,1649.7 2770.0,1639.8 2774.1,1631.9 2778.2,1631.0 2782.3,1628.6 2786.4,1631.6 2790.4,1633.5 2794.5,1641.0 2798.6,1645.2 2802.7,1652.3 2806.8,1666.3 2810.8,1682.1 2814.9,1693.2 2819.0,1709.5 2823.1,1726.4 2827.2,1751.0 2831.2,1768.1 2835.3,1789.4 2839.4,1813.4 2843.5,1836.0 2847.6,1855.9 2851.6,1876.4 2855.7,1901.4 2859.8,1921.1 2863.9,1943.7 2868.0,1958.2 2872.0,1977.0 2876.1,1990.3 2880.2,2004.4 2884.3,2017.6 2888.4,2031.1 2892.4,2039.4 2896.5,2048.4 2900.6,2054.0 2904.7,2052.4 2908.8,2052.4 2912.8,2047.0 2916.9,2044.1 2921.0,2034.5 2925.1,2023.7 2929.2,2014.3 2933.2,2003.7 2937.3,1988.0 2941.4,1970.2 2945.5,1954.3 2949.6,1935.6 2953.6,1916.6 2957.7,1892.2 2961.8,1866.5 2965.9,1847.0 2970.0,1827.8 2974.0,1802.7 2978.1,1778.4 2982.2,1754.9 2986.3,1735.9 2990.4,1719.7 2994.4,1700.1 2998.5,1688.1 3002.6,1672.0 3006.7,1662.9 3010.8,1652.1 3014.8,1642.8 3018.9,1637.0 3023.0,1634.8 3027.1,1633.7 3031.2,1630.3 3035.2,1633.5 3039.3,1638.0 3043.4,1647.7 3047.5,1654.9 3051.6,1668.0 3055.6,1680.4 3059.7,1692.6 3063.8,1707.0 3067.9,1730.8 3072.0,1748.0 3076.0,1766.7 3080.1,1790.8 3084.2,1813.8 3088.3,1835.1 3092.4,1854.3 3096.4,1878.3 3100.5,1897.4 3104.6,1917.8 3108.7,1941.9 3112.8,1957.6 3116.8,1979.8 3120.9,1997.7 3125.0,2009.3" stroke="#f03c3c" stroke-width="1.7"/><polyline points="371.0,1743.5 375.1,1753.3 379.2,1769.8 383.2,1785.1 387.3,1795.5 391.4,1808.1 395.5,1821.8 399.6,1837.8 403.6,1851.1 407.7,1864.5 411.8,1877.8 415.9,1893.1 420.0,1905.1 424.0,1916.6 428.1,1925.2 432.2,1931.9 436.3,1938.7 440.4,1947.3 444.4,1954.5 448.5,1960.8 452.6,1966.2 456.7,1969.2 460.8,1967.6 464.8,1965.9 468.9,1962.5 473.0,1954.9 477.1,1949.3 481.2,1942.1 485.2,1935.7 489.3,1928.6 493.4,1917.8 497.5,1907.3 501.6,1893.4 505.6,1876.7 509.7,1862.9 513.8,1851.8 517.9,1835.2 522.0,1820.1 526.0,1805.9 530.1,1791.0 534.2,1777.8 538.3,1764.9 542.4,1755.3 546.4,1741.8 550.5,1730.1 554.6,1724.8 558.7,1715.4 562.8,1708.0 566.8,1703.6 570.9,1699.6 575.0,1697.2 579.1,1693.4 583.2,1694.6 587.2,1694.8 591.3,1699.9 595.4,1702.4 599.5,1706.9 603.6,1715.8 607.6,1724.6 611.7,1732.2 615.8,1742.8 619.9,1755.6 624.0,1770.3 628.0,1784.0 632.1,1795.7 636.2,1811.6 640.3,1822.5 644.4,1838.5 648.4,1849.8 652.5,1865.5 656.6,1876.2 660.7,1888.9 664.8,1902.2 668.8,1914.2 672.9,1924.2 677.0,1933.6 681.1,1943.6 685.2,1952.2 689.2,1957.1 693.3,1958.4 697.4,1961.3 701.5,1966.0 705.6,1963.5 709.6,1961.1 713.7,1956.5 717.8,1955.4 721.9,1948.3 726.0,1944.5 730.0,1934.6 734.1,1926.5 738.2,1917.1 742.3,1902.5 746.4,1892.9 750.4,1879.1 754.5,1863.3 758.6,1851.6 762.7,1839.1 766.8,1821.9 770.8,1808.8 774.9,1793.8 779.0,1783.8 783.1,1771.0 787.2,1760.0 791.2,1746.4 795.3,1738.1 799.4,1724.8 803.5,1719.8 807.6,1710.5 811.6,1707.7 815.7,1703.7 819.8,1697.7 823.9,1698.3 828.0,1699.4 832.0,1698.6 836.1,1701.9 840.2,1708.6 844.3,1710.1 848.4,1719.6 852.4,1730.0 856.5,1738.9 860.6,1747.5 864.7,1757.0 868.8,1771.8 872.8,1784.8 876.9,1800.2 881.0,1812.6 885.1,1824.0 889.2,1836.6 893.2,1848.7 897.3,1862.3 901.4,1874.8 905.5,1888.1 909.6,1902.0 913.6,1915.8 917.7,1925.1 921.8,1935.8 925.9,1946.1 930.0,1952.3 934.0,1955.0 938.1,1961.9 942.2,1963.7 946.3,1965.5 950.4,1965.0 954.4,1965.4 958.5,1958.8 962.6,1956.3 966.7,1949.7 970.8,1943.2 974.8,1937.6 978.9,1926.6 983.0,1917.6 987.1,1907.6 991.2,1896.4 995.2,1883.3 999.3,1870.2 1003.4,1853.5 1007.5,1838.4 1011.6,1820.9 1015.6,1805.1 1019.7,1790.0 1023.8,1780.3 1027.9,1768.4 1032.0,1757.9 1036.0,1745.6 1040.1,1734.4 1044.2,1723.5 1048.3,1714.9 1052.4,1710.4 1056.4,1705.2 1060.5,1700.6 1064.6,1700.7 1068.7,1700.8 1072.8,1699.6 1076.8,1702.1 1080.9,1702.1 1085.0,1707.5 1089.1,1714.7 1093.2,1722.2 1097.2,1730.5 1101.3,1740.0 1105.4,1748.7 1109.5,1759.4 1113.6,1772.1 1117.6,1783.2 1121.7,1798.2 1125.8,1808.8 1129.9,1820.5 1134.0,1834.6 1138.0,1850.3 1142.1,1864.7 1146.2,1878.0 1150.3,1893.9 1154.4,1905.8 1158.4,1916.3 1162.5,1928.2 1166.6,1939.1 1170.7,1943.9 1174.8,1951.5 1178.8,1956.6 1182.9,1958.2 1187.0,1961.3 1191.1,1964.7 1195.2,1961.8 1199.2,1962.1 1203.3,1962.3 1207.4,1955.9 1211.5,1952.4 1215.6,1945.5 1219.6,1934.1 1223.7,1923.7 1227.8,1916.6 1231.9,1904.7 1236.0,1892.4 1240.0,1879.0 1244.1,1866.9 1248.2,1851.7 1252.3,1839.9 1256.4,1825.9 1260.4,1811.4 1264.5,1794.1 1268.6,1783.6 1272.7,1768.5 1276.8,1758.4 1280.8,1746.0 1284.9,1736.0 1289.0,1726.4 1293.1,1716.4 1297.2,1710.5 1301.2,1707.0 1305.3,1704.1 1309.4,1702.3 1313.5,1697.0 1317.6,1695.9 1321.6,1694.9 1325.7,1697.9 1329.8,1706.3 1333.9,1710.7 1338.0,1716.3 1342.0,1724.0 1346.1,1734.5 1350.2,1746.4 1354.3,1758.0 1358.4,1768.4 1362.4,1783.3 1366.5,1796.4 1370.6,1810.2 1374.7,1821.5 1378.8,1834.8 1382.8,1847.5 1386.9,1861.1 1391.0,1877.6 1395.1,1892.6 1399.2,1904.6 1403.2,1917.2 1407.3,1927.3 1411.4,1935.1 1415.5,1940.9 1419.6,1948.4 1423.6,1953.0 1427.7,1960.9 1431.8,1964.4 1435.9,1962.4 1440.0,1965.3 1444.0,1964.0 1448.1,1963.2 1452.2,1959.9 1456.3,1950.1 1460.4,1940.0 1464.4,1931.9 1468.5,1925.7 1472.6,1916.1 1476.7,1905.6 1480.8,1891.4 1484.8,1877.2 1488.9,1864.5 1493.0,1850.6 1497.1,1839.0 1501.2,1823.8 1505.2,1806.7 1509.3,1792.3 1513.4,1782.4 1517.5,1769.2 1521.6,1755.6 1525.6,1746.2 1529.7,1733.1 1533.8,1724.7 1537.9,1715.7 1542.0,1710.0 1546.0,1701.6 1550.1,1696.9 1554.2,1695.1 1558.3,1696.8 1562.4,1697.0 1566.4,1701.1 1570.5,1702.2 1574.6,1703.8 1578.7,1712.1 1582.8,1718.7 1586.8,1726.9 1590.9,1736.8 1595.0,1745.7 1599.1,1754.8 1603.2,1767.0 1607.2,1781.3 1611.3,1792.6 1615.4,1808.9 1619.5,1821.9 1623.6,1835.9 1627.6,1849.3 1631.7,1862.1 1635.8,1878.6 1639.9,1890.9 1644.0,1904.1 1648.0,1914.5 1652.1,1922.5 1656.2,1932.4 1660.3,1944.7 1664.4,1951.4 1668.4,1955.4 1672.5,1957.7 1676.6,1960.7 1680.7,1961.3 1684.8,1965.4 1688.8,1960.9 1692.9,1957.4 1697.0,1953.4 1701.1,1946.1 1705.2,1938.2 1709.2,1934.0 1713.3,1922.8 1717.4,1911.6 1721.5,1903.1 1725.6,1889.4 1729.6,1876.6 1733.7,1865.5 1737.8,1849.5 1741.9,1838.2 1746.0,1822.9 1750.0,1809.2 1754.1,1796.7 1758.2,1782.3 1762.3,1769.4 1766.4,1758.7 1770.4,1743.8 1774.5,1736.5 1778.6,1729.5 1782.7,1719.8 1786.8,1709.9 1790.8,1703.5 1794.9,1698.2 1799.0,1696.4 1803.1,1694.5 1807.2,1696.2 1811.2,1699.2 1815.3,1701.7 1819.4,1708.6 1823.5,1715.5 1827.6,1719.4 1831.6,1729.2 1835.7,1736.1 1839.8,1744.9 1843.9,1757.5 1848.0,1768.9 1852.0,1780.6 1856.1,1792.8 1860.2,1810.2 1864.3,1826.2 1868.4,1840.1 1872.4,1853.6 1876.5,1868.0 1880.6,1883.4 1884.7,1894.3 1888.8,1902.8 1892.8,1915.5 1896.9,1925.7 1901.0,1935.9 1905.1,1944.2 1909.2,1948.7 1913.2,1956.2 1917.3,1959.6 1921.4,1962.8 1925.5,1964.2 1929.6,1961.8 1933.6,1963.9 1937.7,1958.6 1941.8,1955.9 1945.9,1949.1 1950.0,1940.5 1954.0,1932.1 1958.1,1924.2 1962.2,1911.9 1966.3,1903.9 1970.4,1890.5 1974.4,1878.3 1978.5,1864.6 1982.6,1848.7 1986.7,1833.7 1990.8,1820.1 1994.8,1808.2 1998.9,1796.2 2003.0,1782.6 2007.1,1770.9 2011.2,1759.2 2015.2,1744.1 2019.3,1736.5 2023.4,1724.6 2027.5,1717.5 2031.6,1711.3 2035.6,1706.3 2039.7,1703.9 2043.8,1700.0 2047.9,1699.6 2052.0,1698.7 2056.0,1700.5 2060.1,1700.2 2064.2,1702.4 2068.3,1709.7 2072.4,1716.6 2076.4,1723.0 2080.5,1734.9 2084.6,1748.3 2088.7,1760.6 2092.8,1773.6 2096.8,1784.1 2100.9,1797.8 2105.0,1811.9 2109.1,1823.5 2113.2,1839.4 2117.2,1851.1 2121.3,1864.6 2125.4,1879.1 2129.5,1890.1 2133.6,1904.0 2137.6,1913.2 2141.7,1922.1 2145.8,1933.0 2149.9,1941.0 2154.0,1946.3 2158.0,1952.2 2162.1,1956.6 2166.2,1958.8 2170.3,1959.4 2174.4,1959.9 2178.4,1957.4 2182.5,1957.8 2186.6,1953.5 2190.7,1947.5 2194.8,1942.1 2198.8,1934.6 2202.9,1926.9 2207.0,1912.9 2211.1,1902.9 2215.2,1890.8 2219.2,1875.5 2223.3,1864.9 2227.4,1848.2 2231.5,1837.3 2235.6,1825.8 2239.6,1811.4 2243.7,1797.4 2247.8,1780.5 2251.9,1765.8 2256.0,1753.3 2260.0,1743.6 2264.1,1733.6 2268.2,1726.3 2272.3,1715.8 2276.4,1710.1 2280.4,1705.8 2284.5,1700.3 2288.6,1699.6 2292.7,1698.5 2296.8,1695.2 2300.8,1699.6 2304.9,1704.1 2309.0,1709.0 2313.1,1714.8 2317.2,1720.9 2321.2,1729.7 2325.3,1738.9 2329.4,1749.8 2333.5,1761.5 2337.6,1771.7 2341.6,1785.0 2345.7,1798.4 2349.8,1809.8 2353.9,1826.6 2358.0,1841.9 2362.0,1852.4 2366.1,1866.5 2370.2,1878.0 2374.3,1893.6 2378.4,1905.0 2382.4,1914.1 2386.5,1926.1 2390.6,1933.8 2394.7,1942.0 2398.8,1950.2 2402.8,1953.0 2406.9,1959.2 2411.0,1962.7 2415.1,1963.6 2419.2,1965.0 2423.2,1961.3 2427.3,1958.3 2431.4,1954.0 2435.5,1948.6 2439.6,1939.1 2443.6,1929.2 2447.7,1919.7 2451.8,1911.5 2455.9,1901.7 2460.0,1889.8 2464.0,1879.9 2468.1,1867.9 2472.2,1849.8 2476.3,1838.3 2480.4,1820.9 2484.4,1806.5 2488.5,1791.1 2492.6,1781.7 2496.7,1769.9 2500.8,1755.5 2504.8,1747.5 2508.9,1738.5 2513.0,1728.6 2517.1,1721.1 2521.2,1714.7 2525.2,1706.3 2529.3,1703.8 2533.4,1696.8 2537.5,1694.9 2541.6,1698.2 2545.6,1696.7 2549.7,1701.7 2553.8,1706.0 2557.9,1711.2 2562.0,1720.4 2566.0,1727.9 2570.1,1739.5 2574.2,1750.5 2578.3,1757.9 2582.4,1768.3 2586.4,1781.9 2590.5,1794.7 2594.6,1807.0 2598.7,1824.5 2602.8,1838.6 2606.8,1854.7 2610.9,1869.8 2615.0,1884.0 2619.1,1896.7 2623.2,1909.7 2627.2,1920.6 2631.3,1929.8 2635.4,1936.9 2639.5,1942.4 2643.6,1947.4 2647.6,1953.0 2651.7,1958.5 2655.8,1959.6 2659.9,1964.5 2664.0,1966.8 2668.0,1962.4 2672.1,1958.9 2676.2,1956.6 2680.3,1951.0 2684.4,1944.6 2688.4,1935.8 2692.5,1926.1 2696.6,1915.6 2700.7,1901.9 2704.8,1888.1 2708.8,1875.8 2712.9,1863.3 2717.0,1851.2 2721.1,1835.3 2725.2,1818.8 2729.2,1807.9 2733.3,1793.2 2737.4,1779.3 2741.5,1766.4 2745.6,1757.9 2749.6,1745.7 2753.7,1736.8 2757.8,1728.5 2761.9,1718.6 2766.0,1710.2 2770.0,1703.9 2774.1,1698.5 2778.2,1695.3 2782.3,1695.0 2786.4,1698.3 2790.4,1697.5 2794.5,1698.8 2798.6,1702.1 2802.7,1708.7 2806.8,1719.5 2810.8,1729.2 2814.9,1740.0 2819.0,1748.2 2823.1,1758.8 2827.2,1772.6 2831.2,1781.9 2835.3,1793.0 2839.4,1805.9 2843.5,1821.9 2847.6,1838.2 2851.6,1854.1 2855.7,1865.2 2859.8,1877.8 2863.9,1892.6 2868.0,1902.3 2872.0,1914.1 2876.1,1925.7 2880.2,1935.7 2884.3,1942.5 2888.4,1950.2 2892.4,1955.0 2896.5,1962.0 2900.6,1963.0 2904.7,1965.8 2908.8,1962.8 2912.8,1963.6 2916.9,1961.3 2921.0,1956.1 2925.1,1950.6 2929.2,1943.0 2933.2,1931.9 2937.3,1925.1 2941.4,1912.8 2945.5,1900.7 2949.6,1887.6 2953.6,1876.2 2957.7,1863.6 2961.8,1851.0 2965.9,1836.9 2970.0,1824.1 2974.0,1811.2 2978.1,1796.5 2982.2,1784.2 2986.3,1770.4 2990.4,1757.1 2994.4,1746.6 2998.5,1737.6 3002.6,1726.5 3006.7,1715.7 3010.8,1711.0 3014.8,1704.4 3018.9,1699.3 3023.0,1694.7 3027.1,1693.4 3031.2,1695.8 3035.2,1699.3 3039.3,1699.8 3043.4,1705.9 3047.5,1714.4 3051.6,1718.1 3055.6,1728.4 3059.7,1738.3 3063.8,1749.1 3067.9,1761.0 3072.0,1770.8 3076.0,1784.5 3080.1,1797.8 3084.2,1811.6 3088.3,1823.2 3092.4,1840.7 3096.4,1853.3 3100.5,1868.9 3104.6,1883.3 3108.7,1894.0 3112.8,1906.2 3116.8,1919.4 3120.9,1927.9 3125.0,1934.1" stroke="#3a78b4" stroke-width="2.2"/></g><line x1="150" y1="1893.3" x2="160" y2="1893.3" stroke="#222" stroke-width="2"/><line x1="150" y1="1844.0" x2="160" y2="1844.0" stroke="#222" stroke-width="2"/><line x1="150" y1="1794.7" x2="160" y2="1794.7" stroke="#222" stroke-width="2"/><line x1="150" y1="1745.4" x2="160" y2="1745.4" stroke="#222" stroke-width="2"/><line x1="150" y1="1696.1" x2="160" y2="1696.1" stroke="#222" stroke-width="2"/><line x1="150" y1="1646.8" x2="160" y2="1646.8" stroke="#222" stroke-width="2"/><line x1="150" y1="1597.5" x2="160" y2="1597.5" stroke="#222" stroke-width="2"/></svg>
<div class="t" style="top:1883.8px;font-size:25px;color:#262626;transform:scaleX(0.94);transform-origin:right 0;right:3854.7px;">0</div>
<div class="t" style="top:1834.5px;font-size:25px;color:#262626;transform:scaleX(0.94);transform-origin:right 0;right:3854.7px;">20</div>
<div class="t" style="top:1785.2px;font-size:25px;color:#262626;transform:scaleX(0.94);transform-origin:right 0;right:3854.7px;">40</div>
<div class="t" style="top:1735.9px;font-size:25px;color:#262626;transform:scaleX(0.94);transform-origin:right 0;right:3854.7px;">60</div>
<div class="t" style="top:1686.6px;font-size:25px;color:#262626;transform:scaleX(0.94);transform-origin:right 0;right:3854.7px;">80</div>
<div class="t" style="top:1637.3px;font-size:25px;color:#262626;transform:scaleX(0.94);transform-origin:right 0;right:3854.7px;">100</div>
<div class="t" style="top:1588.0px;font-size:25px;color:#262626;transform:scaleX(0.94);transform-origin:right 0;right:3854.7px;">120</div>
<div class="r" style="left:3217px;top:1569.8px;width:716px;height:400px;border:2px solid #a4a6aa;background:#ffffff;"></div>
<div class="r" style="left:3903.5px;top:1573.8px;width:1.5px;height:333.2px;background:#ececec;"></div>
<div class="r" style="left:3225.5px;top:1583.2px;width:25px;height:25px;background:#4a86be;"><svg width="25" height="25" style="position:absolute;left:0;top:0"><path d="M6.5 13.5 L11.5 21.5 L20.8 4.5" fill="none" stroke="#eef4fb" stroke-width="2.2" stroke-linecap="round" stroke-linejoin="round"/></svg></div>
<div class="t" style="top:1584.7px;font-size:25px;color:#262626;transform:scaleX(0.981);transform-origin:left 0;left:3263.2px;">COMMON#TC#4_000</div>
<div class="r" style="left:3836px;top:1579.5px;width:56px;height:34px;border:2px solid #9c9c9c;background:#f4f5f8;"><svg width="56" height="34" style="position:absolute;left:0;top:0"><polyline points="2,26 20,4 37,26 54,4" fill="none" stroke="#4f86b8" stroke-width="1.7"/></svg></div>
<div class="r" style="left:3225.5px;top:1631.5px;width:25px;height:25px;background:#4a86be;"><svg width="25" height="25" style="position:absolute;left:0;top:0"><path d="M6.5 13.5 L11.5 21.5 L20.8 4.5" fill="none" stroke="#eef4fb" stroke-width="2.2" stroke-linecap="round" stroke-linejoin="round"/></svg></div>
<div class="t" style="top:1633.0px;font-size:25px;color:#262626;transform:scaleX(0.981);transform-origin:left 0;left:3263.2px;">COMMON#TC#4_060</div>
<div class="r" style="left:3836px;top:1627.8px;width:56px;height:34px;border:2px solid #9c9c9c;background:#f4f5f8;"><svg width="56" height="34" style="position:absolute;left:0;top:0"><polyline points="2,26 20,4 37,26 54,4" fill="none" stroke="#e8404c" stroke-width="1.7"/></svg></div>
<div class="r" style="left:3225.5px;top:1679.9px;width:25px;height:25px;background:#4a86be;"><svg width="25" height="25" style="position:absolute;left:0;top:0"><path d="M6.5 13.5 L11.5 21.5 L20.8 4.5" fill="none" stroke="#eef4fb" stroke-width="2.2" stroke-linecap="round" stroke-linejoin="round"/></svg></div>
<div class="r" style="left:3836px;top:1676.2px;width:56px;height:34px;border:2px solid #9c9c9c;background:#f4f5f8;"><svg width="56" height="34" style="position:absolute;left:0;top:0"><polyline points="2,26 20,4 37,26 54,4" fill="none" stroke="#22dd22" stroke-width="1.7"/></svg></div>
<div class="r" style="left:3225.5px;top:1728.2px;width:25px;height:25px;background:#4a86be;"><svg width="25" height="25" style="position:absolute;left:0;top:0"><path d="M6.5 13.5 L11.5 21.5 L20.8 4.5" fill="none" stroke="#eef4fb" stroke-width="2.2" stroke-linecap="round" stroke-linejoin="round"/></svg></div>
<div class="r" style="left:3836px;top:1724.5px;width:56px;height:34px;border:2px solid #9c9c9c;background:#f4f5f8;"><svg width="56" height="34" style="position:absolute;left:0;top:0"><polyline points="2,26 20,4 37,26 54,4" fill="none" stroke="#44b4ff" stroke-width="1.7"/></svg></div>
<div class="r" style="left:3225.5px;top:1776.6px;width:25px;height:25px;background:#4a86be;"><svg width="25" height="25" style="position:absolute;left:0;top:0"><path d="M6.5 13.5 L11.5 21.5 L20.8 4.5" fill="none" stroke="#eef4fb" stroke-width="2.2" stroke-linecap="round" stroke-linejoin="round"/></svg></div>
<div class="r" style="left:3836px;top:1772.9px;width:56px;height:34px;border:2px solid #9c9c9c;background:#f4f5f8;"><svg width="56" height="34" style="position:absolute;left:0;top:0"><polyline points="2,26 20,4 37,26 54,4" fill="none" stroke="#c8ff44" stroke-width="1.7"/></svg></div>
<div class="r" style="left:3225.5px;top:1825.0px;width:25px;height:25px;background:#4a86be;"><svg width="25" height="25" style="position:absolute;left:0;top:0"><path d="M6.5 13.5 L11.5 21.5 L20.8 4.5" fill="none" stroke="#eef4fb" stroke-width="2.2" stroke-linecap="round" stroke-linejoin="round"/></svg></div>
<div class="r" style="left:3836px;top:1821.2px;width:56px;height:34px;border:2px solid #9c9c9c;background:#f4f5f8;"><svg width="56" height="34" style="position:absolute;left:0;top:0"><polyline points="2,26 20,4 37,26 54,4" fill="none" stroke="#c044ff" stroke-width="1.7"/></svg></div>
<div class="r" style="left:3225.5px;top:1873.3px;width:25px;height:25px;background:#4a86be;"><svg width="25" height="25" style="position:absolute;left:0;top:0"><path d="M6.5 13.5 L11.5 21.5 L20.8 4.5" fill="none" stroke="#eef4fb" stroke-width="2.2" stroke-linecap="round" stroke-linejoin="round"/></svg></div>
<div class="r" style="left:3836px;top:1869.6px;width:56px;height:34px;border:2px solid #9c9c9c;background:#f4f5f8;"><svg width="56" height="34" style="position:absolute;left:0;top:0"><polyline points="2,26 20,4 37,26 54,4" fill="none" stroke="#ffa81c" stroke-width="1.7"/></svg></div>
<svg class="r" style="left:3908px;top:1582px" width="22" height="16"><path d="M11 2 L19 14 L3 14 Z" fill="#ababab"/></svg>
<div class="r" style="left:3913.7px;top:1604.3px;width:10.5px;height:302.7px;background:#a6a8ab;"></div>
</body></html>
